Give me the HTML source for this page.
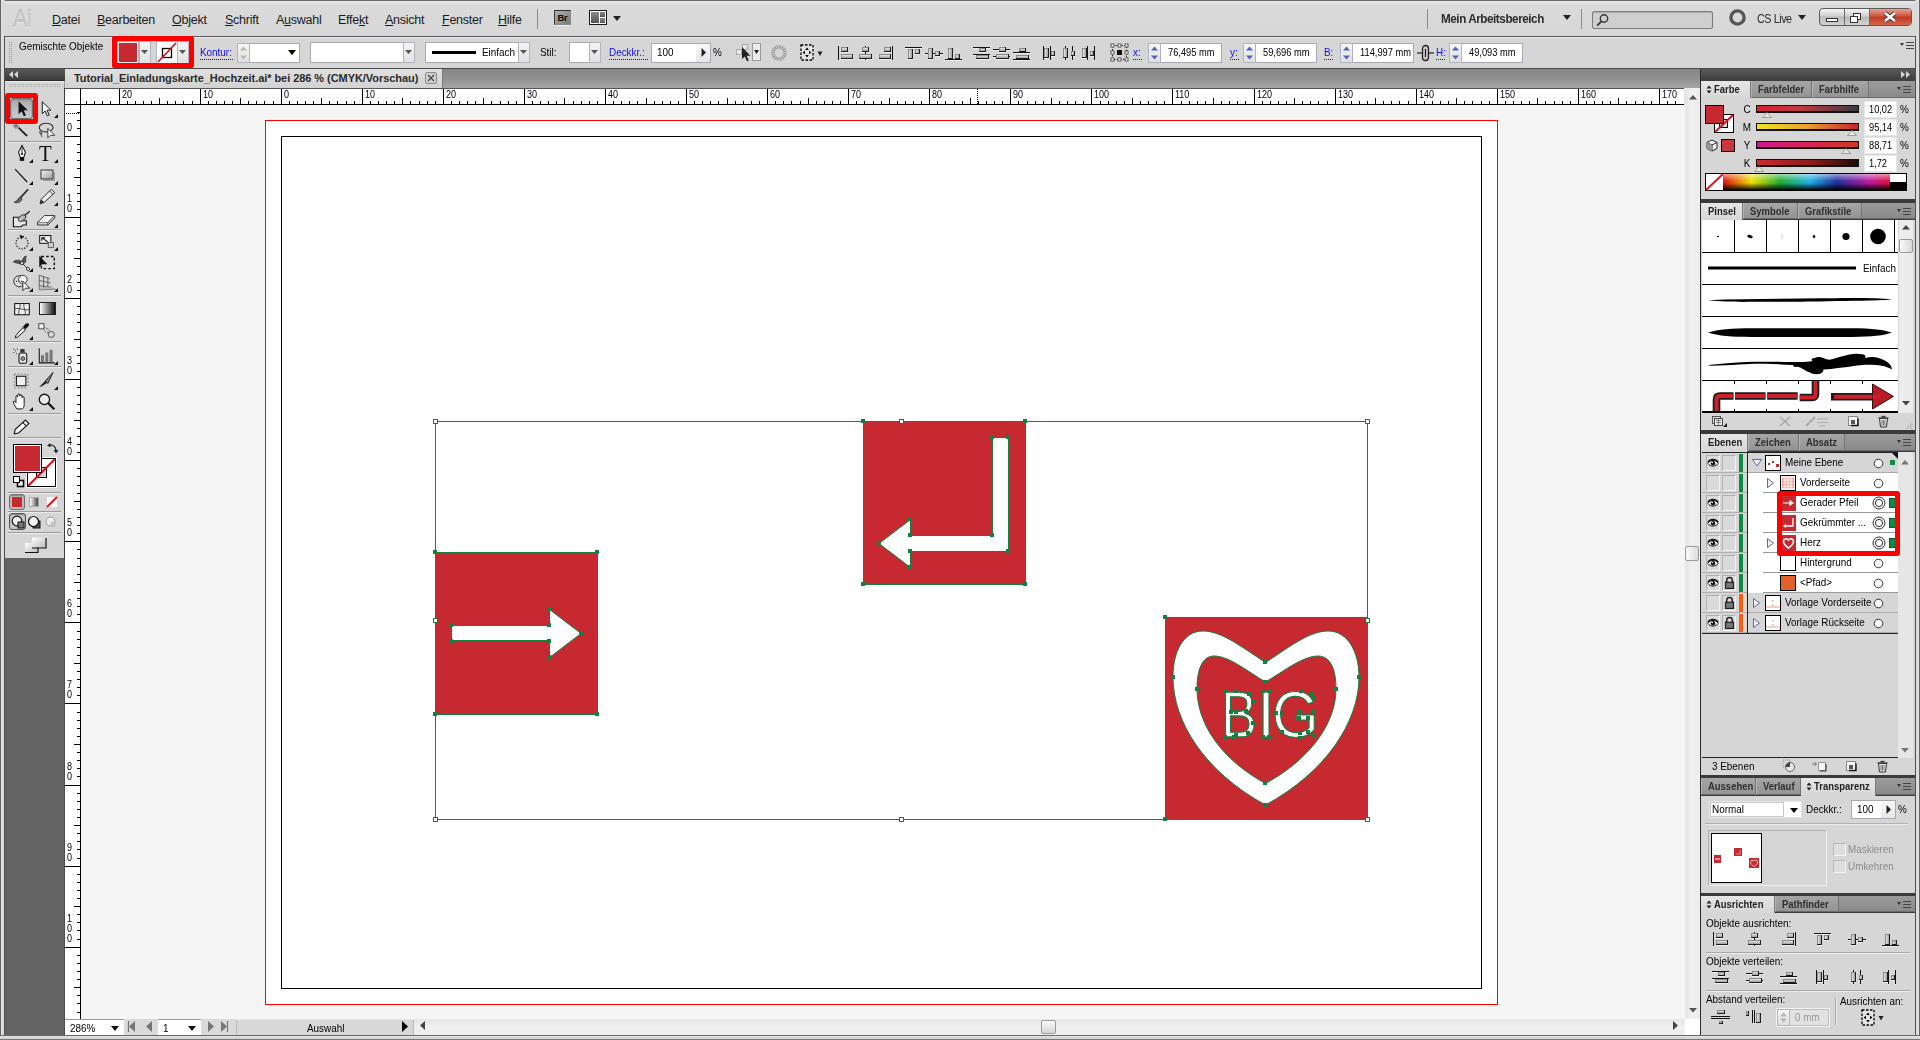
<!DOCTYPE html>
<html lang="de"><head><meta charset="utf-8"><title>Tutorial_Einladungskarte_Hochzeit.ai</title>
<style>
html,body{margin:0;padding:0}
body{width:1920px;height:1040px;position:relative;overflow:hidden;background:#d6d6d6;font-family:"Liberation Sans",sans-serif;font-size:11px;color:#000}
div,span.t,span.m,span.b,svg{position:absolute;box-sizing:border-box}
svg{overflow:visible}
span.t{white-space:nowrap;line-height:13px;font-size:11px;letter-spacing:0;transform:scaleX(.9);transform-origin:0 50%}
span.m{white-space:nowrap;font-size:12.5px;line-height:16px;color:#1a1a1a;letter-spacing:-0.25px}
span.b{white-space:nowrap;font-size:11px;line-height:13px;font-weight:bold;color:#2a2a2a;letter-spacing:0;transform:scaleX(.86);transform-origin:0 50%}
.inp{background:#fff;border:1px solid #a9a9b3}
</style></head><body>

<div style="left:0px;top:0px;width:1920px;height:1040px;background:#d6d6d6"></div>
<div style="left:0px;top:0px;width:1920px;height:37px;background:linear-gradient(#e6e6e6 0,#e6e6e6 2px,#dbdbdb 3px,#d7d7d7);border-top:1px solid #6a6a6a"></div>
<div style="left:0px;top:36px;width:1920px;height:1px;background:#5c5c5c"></div>
<div style="left:0px;top:37px;width:1920px;height:1px;background:#e8e8e8"></div>
<div style="left:0px;top:68px;width:1920px;height:1px;background:#4a4a4a"></div>
<span class="t" style="left:13px;top:5px;font-size:24px;line-height:28px;color:#c6c6c6;letter-spacing:-0.5px;transform:scaleX(0.9);transform-origin:0 0;text-shadow:0 1px 0 #ececec,0 -1px 0 #b4b4b4">Ai</span>
<span class="m" style="left:52px;top:12px;"><u>D</u>atei</span>
<span class="m" style="left:97px;top:12px;"><u>B</u>earbeiten</span>
<span class="m" style="left:172px;top:12px;"><u>O</u>bjekt</span>
<span class="m" style="left:225px;top:12px;"><u>S</u>chrift</span>
<span class="m" style="left:276px;top:12px;">A<u>u</u>swahl</span>
<span class="m" style="left:338px;top:12px;">Effe<u>k</u>t</span>
<span class="m" style="left:385px;top:12px;"><u>A</u>nsicht</span>
<span class="m" style="left:442px;top:12px;"><u>F</u>enster</span>
<span class="m" style="left:498px;top:12px;"><u>H</u>ilfe</span>
<div style="left:537px;top:9px;width:1px;height:20px;background:#8c8c8c"></div>
<div style="left:554px;top:10px;width:17px;height:15px;background:linear-gradient(135deg,#b0b0b0,#7a7a7a);border:1px solid #555;border-top-color:#2a2a2a;border-left-color:#3a3a3a;border-bottom-color:#8a8a8a;border-right-color:#8a8a8a;color:#0a0a0a;font-size:9.5px;font-weight:bold;line-height:13px;text-align:center;letter-spacing:-0.3px;box-shadow:0 1px 0 #eee">Br</div>
<svg style="left:589px;top:10px" width="18" height="15" viewBox="0 0 18 15" ><defs><linearGradient id="lg3" x1="0" y1="0" x2="0" y2="1"><stop offset="0" stop-color="#8a8a8a"/><stop offset="1" stop-color="#555"/></linearGradient></defs><rect x="0.500" y="0.500" width="17" height="14" fill="#fff" stroke="#1a1a1a"/><rect x="2" y="2" width="8" height="11" fill="url(#lg3)"/><rect x="11" y="2" width="5" height="5" fill="url(#lg3)"/><rect x="11" y="8" width="5" height="5" fill="url(#lg3)"/></svg>
<svg style="left:613px;top:16px" width="9" height="6" viewBox="0 0 9 6" ><path d="M0 0h8l-4 5z" fill="#222"/></svg>
<div style="left:1427px;top:9px;width:1px;height:20px;background:#8c8c8c"></div>
<span class="t" style="left:1441px;top:11px;font-size:13px;line-height:16px;font-weight:bold;color:#2c2c2c;letter-spacing:-0.5px">Mein Arbeitsbereich</span>
<svg style="left:1563px;top:15px" width="9" height="6" viewBox="0 0 9 6" ><path d="M0 0h8l-4 5z" fill="#222"/></svg>
<div style="left:1581px;top:9px;width:1px;height:20px;background:#8c8c8c"></div>
<div style="left:1592px;top:11px;width:121px;height:18px;background:#cfcfcf;border:1px solid #7b7b7b;border-radius:2px;box-shadow:inset 0 1px 1px #aaa"></div>
<svg style="left:1596px;top:13px" width="14" height="14" viewBox="0 0 14 14" ><circle cx="8" cy="5.5" r="3.7" fill="none" stroke="#333" stroke-width="1.4"/><path d="M5.3 8.4L1.2 12.6" stroke="#333" stroke-width="1.8"/></svg>
<svg style="left:1729px;top:9px" width="18" height="18" viewBox="0 0 18 18" ><circle cx="8.5" cy="8.5" r="6.6" fill="none" stroke="#555" stroke-width="3.4"/></svg>
<span class="t" style="left:1757px;top:11px;font-size:12px;line-height:16px;color:#2c2c2c;letter-spacing:-0.5px">CS Live</span>
<svg style="left:1798px;top:15px" width="9" height="6" viewBox="0 0 9 6" ><path d="M0 0h8l-4 5z" fill="#222"/></svg>
<div style="left:1819px;top:8px;width:93px;height:18px;border:1px solid #5a5a5a;border-radius:4px;background:linear-gradient(#f4f4f4,#cfcfcf 45%,#b9b9b9 50%,#d3d3d3);overflow:hidden"></div>
<div style="left:1870px;top:9px;width:41px;height:16px;background:linear-gradient(#e8a090,#d0543c 45%,#c03a22 50%,#d4644a);border-radius:0 3px 3px 0"></div>
<div style="left:1844px;top:9px;width:1px;height:16px;background:#6a6a6a"></div>
<div style="left:1869px;top:9px;width:1px;height:16px;background:#6a6a6a"></div>
<svg style="left:1819px;top:8px" width="93" height="18" viewBox="0 0 93 18" ><rect x="7.5" y="10.5" width="11" height="3" fill="#fff" stroke="#333"/><rect x="34.500" y="5.500" width="7" height="6" fill="#fff" stroke="#333"/><rect x="31.500" y="8.500" width="7" height="6" fill="#fff" stroke="#333"/><path d="M66 5l10 8M76 5l-10 8" stroke="#444" stroke-width="4.4"/><path d="M66 5l10 8M76 5l-10 8" stroke="#fff" stroke-width="2.4"/></svg>
<div style="left:0px;top:0px;width:5px;height:1040px;background:linear-gradient(90deg,#62646a 0,#62646a 1px,#e2e2e2 1px,#d8d8d8 4px,#d8d8d8 5px)"></div>
<div style="left:4px;top:36px;width:1px;height:1000px;background:#505050"></div>
<div style="left:1915px;top:0px;width:5px;height:1040px;background:linear-gradient(90deg,#d8d8d8 0,#d8d8d8 1px,#d8d8d8 1px,#e2e2e2 4px,#62646a 4px)"></div>
<div style="left:1915px;top:36px;width:1px;height:1000px;background:#505050"></div>
<div style="left:0px;top:1035px;width:1920px;height:5px;background:linear-gradient(#6a6a6a 0,#6a6a6a 1px,#e2e2e2 1px,#d2d2d2 4px,#777 4px)"></div>
<div style="left:65px;top:69px;width:1635px;height:19px;background:linear-gradient(#878787,#8f8f8f 45%,#a6a6a6)"></div>
<div style="left:65px;top:69px;width:378px;height:19px;background:linear-gradient(#e0e0e0,#d3d3d3);border-right:1px solid #7a7a7a"></div>
<span class="b" style="left:74px;top:72px;letter-spacing:-0.06px;transform:none">Tutorial_Einladungskarte_Hochzeit.ai* bei 286 % (CMYK/Vorschau)</span>
<div style="left:425px;top:72px;width:12px;height:12px;border:1px solid #8a8a8a;border-radius:2px;background:#cfcfcf"></div>
<svg style="left:425px;top:72px" width="12" height="12" viewBox="0 0 12 12" ><path d="M3 3l6 6M9 3l-6 6" stroke="#444" stroke-width="1.2"/></svg>
<div style="left:65px;top:88px;width:1619px;height:17px;background:#fff;border-top:1px solid #555;border-bottom:1px solid #000"></div>
<div style="left:1684px;top:88px;width:1px;height:17px;background:#e0e0e0"></div>
<div style="left:65px;top:104px;width:16px;height:915px;background:#fff;border-right:1px solid #000"></div>
<div style="left:65px;top:88px;width:16px;height:17px;background:#fff;border-top:1px solid #555;border-bottom:1px solid #000;border-right:1px solid #000"></div>
<svg style="left:0px;top:0px" width="1920" height="1040" viewBox="0 0 1920 1040" ><path d="M86 101v3h1v-3zM94 101v3h1v-3zM102 101v3h1v-3zM110 101v3h1v-3zM119 89v15h1v-15zM127 101v3h1v-3zM135 101v3h1v-3zM143 101v3h1v-3zM151 101v3h1v-3zM159 98v6h1v-6zM167 101v3h1v-3zM175 101v3h1v-3zM183 101v3h1v-3zM192 101v3h1v-3zM200 89v15h1v-15zM208 101v3h1v-3zM216 101v3h1v-3zM224 101v3h1v-3zM232 101v3h1v-3zM240 98v6h1v-6zM248 101v3h1v-3zM256 101v3h1v-3zM264 101v3h1v-3zM273 101v3h1v-3zM281 89v15h1v-15zM289 101v3h1v-3zM297 101v3h1v-3zM305 101v3h1v-3zM313 101v3h1v-3zM321 98v6h1v-6zM329 101v3h1v-3zM337 101v3h1v-3zM346 101v3h1v-3zM354 101v3h1v-3zM362 89v15h1v-15zM370 101v3h1v-3zM378 101v3h1v-3zM386 101v3h1v-3zM394 101v3h1v-3zM402 98v6h1v-6zM410 101v3h1v-3zM419 101v3h1v-3zM427 101v3h1v-3zM435 101v3h1v-3zM443 89v15h1v-15zM451 101v3h1v-3zM459 101v3h1v-3zM467 101v3h1v-3zM475 101v3h1v-3zM483 98v6h1v-6zM491 101v3h1v-3zM500 101v3h1v-3zM508 101v3h1v-3zM516 101v3h1v-3zM524 89v15h1v-15zM532 101v3h1v-3zM540 101v3h1v-3zM548 101v3h1v-3zM556 101v3h1v-3zM564 98v6h1v-6zM573 101v3h1v-3zM581 101v3h1v-3zM589 101v3h1v-3zM597 101v3h1v-3zM605 89v15h1v-15zM613 101v3h1v-3zM621 101v3h1v-3zM629 101v3h1v-3zM637 101v3h1v-3zM646 98v6h1v-6zM654 101v3h1v-3zM662 101v3h1v-3zM670 101v3h1v-3zM678 101v3h1v-3zM686 89v15h1v-15zM694 101v3h1v-3zM702 101v3h1v-3zM710 101v3h1v-3zM718 101v3h1v-3zM727 98v6h1v-6zM735 101v3h1v-3zM743 101v3h1v-3zM751 101v3h1v-3zM759 101v3h1v-3zM767 89v15h1v-15zM775 101v3h1v-3zM783 101v3h1v-3zM791 101v3h1v-3zM800 101v3h1v-3zM808 98v6h1v-6zM816 101v3h1v-3zM824 101v3h1v-3zM832 101v3h1v-3zM840 101v3h1v-3zM848 89v15h1v-15zM856 101v3h1v-3zM864 101v3h1v-3zM873 101v3h1v-3zM881 101v3h1v-3zM889 98v6h1v-6zM897 101v3h1v-3zM905 101v3h1v-3zM913 101v3h1v-3zM921 101v3h1v-3zM929 89v15h1v-15zM937 101v3h1v-3zM945 101v3h1v-3zM954 101v3h1v-3zM962 101v3h1v-3zM970 98v6h1v-6zM978 101v3h1v-3zM986 101v3h1v-3zM994 101v3h1v-3zM1002 101v3h1v-3zM1010 89v15h1v-15zM1018 101v3h1v-3zM1027 101v3h1v-3zM1035 101v3h1v-3zM1043 101v3h1v-3zM1051 98v6h1v-6zM1059 101v3h1v-3zM1067 101v3h1v-3zM1075 101v3h1v-3zM1083 101v3h1v-3zM1091 89v15h1v-15zM1100 101v3h1v-3zM1108 101v3h1v-3zM1116 101v3h1v-3zM1124 101v3h1v-3zM1132 98v6h1v-6zM1140 101v3h1v-3zM1148 101v3h1v-3zM1156 101v3h1v-3zM1164 101v3h1v-3zM1172 89v15h1v-15zM1181 101v3h1v-3zM1189 101v3h1v-3zM1197 101v3h1v-3zM1205 101v3h1v-3zM1213 98v6h1v-6zM1221 101v3h1v-3zM1229 101v3h1v-3zM1237 101v3h1v-3zM1245 101v3h1v-3zM1254 89v15h1v-15zM1262 101v3h1v-3zM1270 101v3h1v-3zM1278 101v3h1v-3zM1286 101v3h1v-3zM1294 98v6h1v-6zM1302 101v3h1v-3zM1310 101v3h1v-3zM1318 101v3h1v-3zM1327 101v3h1v-3zM1335 89v15h1v-15zM1343 101v3h1v-3zM1351 101v3h1v-3zM1359 101v3h1v-3zM1367 101v3h1v-3zM1375 98v6h1v-6zM1383 101v3h1v-3zM1391 101v3h1v-3zM1399 101v3h1v-3zM1408 101v3h1v-3zM1416 89v15h1v-15zM1424 101v3h1v-3zM1432 101v3h1v-3zM1440 101v3h1v-3zM1448 101v3h1v-3zM1456 98v6h1v-6zM1464 101v3h1v-3zM1472 101v3h1v-3zM1481 101v3h1v-3zM1489 101v3h1v-3zM1497 89v15h1v-15zM1505 101v3h1v-3zM1513 101v3h1v-3zM1521 101v3h1v-3zM1529 101v3h1v-3zM1537 98v6h1v-6zM1545 101v3h1v-3zM1554 101v3h1v-3zM1562 101v3h1v-3zM1570 101v3h1v-3zM1578 89v15h1v-15zM1586 101v3h1v-3zM1594 101v3h1v-3zM1602 101v3h1v-3zM1610 101v3h1v-3zM1618 98v6h1v-6zM1626 101v3h1v-3zM1635 101v3h1v-3zM1643 101v3h1v-3zM1651 101v3h1v-3zM1659 89v15h1v-15zM1667 101v3h1v-3zM1675 101v3h1v-3z" fill="#000" shape-rendering="crispEdges"/></svg>
<span class="t" style="left:122px;top:90px;font-size:10px;line-height:10px;color:#000010">20</span>
<span class="t" style="left:203px;top:90px;font-size:10px;line-height:10px;color:#000010">10</span>
<span class="t" style="left:284px;top:90px;font-size:10px;line-height:10px;color:#000010">0</span>
<span class="t" style="left:365px;top:90px;font-size:10px;line-height:10px;color:#000010">10</span>
<span class="t" style="left:446px;top:90px;font-size:10px;line-height:10px;color:#000010">20</span>
<span class="t" style="left:527px;top:90px;font-size:10px;line-height:10px;color:#000010">30</span>
<span class="t" style="left:608px;top:90px;font-size:10px;line-height:10px;color:#000010">40</span>
<span class="t" style="left:689px;top:90px;font-size:10px;line-height:10px;color:#000010">50</span>
<span class="t" style="left:770px;top:90px;font-size:10px;line-height:10px;color:#000010">60</span>
<span class="t" style="left:851px;top:90px;font-size:10px;line-height:10px;color:#000010">70</span>
<span class="t" style="left:932px;top:90px;font-size:10px;line-height:10px;color:#000010">80</span>
<span class="t" style="left:1013px;top:90px;font-size:10px;line-height:10px;color:#000010">90</span>
<span class="t" style="left:1094px;top:90px;font-size:10px;line-height:10px;color:#000010">100</span>
<span class="t" style="left:1175px;top:90px;font-size:10px;line-height:10px;color:#000010">110</span>
<span class="t" style="left:1257px;top:90px;font-size:10px;line-height:10px;color:#000010">120</span>
<span class="t" style="left:1338px;top:90px;font-size:10px;line-height:10px;color:#000010">130</span>
<span class="t" style="left:1419px;top:90px;font-size:10px;line-height:10px;color:#000010">140</span>
<span class="t" style="left:1500px;top:90px;font-size:10px;line-height:10px;color:#000010">150</span>
<span class="t" style="left:1581px;top:90px;font-size:10px;line-height:10px;color:#000010">160</span>
<span class="t" style="left:1662px;top:90px;font-size:10px;line-height:10px;color:#000010">170</span>
<svg style="left:0px;top:0px" width="1920" height="1040" viewBox="0 0 1920 1040" ><path d="M77 112h3v1h-3zM77 120h3v1h-3zM77 128h3v1h-3zM65 136h15v1h-15zM77 144h3v1h-3zM77 152h3v1h-3zM77 160h3v1h-3zM77 168h3v1h-3zM74 177h6v1h-6zM77 185h3v1h-3zM77 193h3v1h-3zM77 201h3v1h-3zM77 209h3v1h-3zM65 217h15v1h-15zM77 225h3v1h-3zM77 233h3v1h-3zM77 241h3v1h-3zM77 249h3v1h-3zM74 258h6v1h-6zM77 266h3v1h-3zM77 274h3v1h-3zM77 282h3v1h-3zM77 290h3v1h-3zM65 298h15v1h-15zM77 306h3v1h-3zM77 314h3v1h-3zM77 322h3v1h-3zM77 331h3v1h-3zM74 339h6v1h-6zM77 347h3v1h-3zM77 355h3v1h-3zM77 363h3v1h-3zM77 371h3v1h-3zM65 379h15v1h-15zM77 387h3v1h-3zM77 395h3v1h-3zM77 404h3v1h-3zM77 412h3v1h-3zM74 420h6v1h-6zM77 428h3v1h-3zM77 436h3v1h-3zM77 444h3v1h-3zM77 452h3v1h-3zM65 460h15v1h-15zM77 468h3v1h-3zM77 476h3v1h-3zM77 485h3v1h-3zM77 493h3v1h-3zM74 501h6v1h-6zM77 509h3v1h-3zM77 517h3v1h-3zM77 525h3v1h-3zM77 533h3v1h-3zM65 541h15v1h-15zM77 549h3v1h-3zM77 558h3v1h-3zM77 566h3v1h-3zM77 574h3v1h-3zM74 582h6v1h-6zM77 590h3v1h-3zM77 598h3v1h-3zM77 606h3v1h-3zM77 614h3v1h-3zM65 622h15v1h-15zM77 631h3v1h-3zM77 639h3v1h-3zM77 647h3v1h-3zM77 655h3v1h-3zM74 663h6v1h-6zM77 671h3v1h-3zM77 679h3v1h-3zM77 687h3v1h-3zM77 695h3v1h-3zM65 703h15v1h-15zM77 712h3v1h-3zM77 720h3v1h-3zM77 728h3v1h-3zM77 736h3v1h-3zM74 744h6v1h-6zM77 752h3v1h-3zM77 760h3v1h-3zM77 768h3v1h-3zM77 776h3v1h-3zM65 785h15v1h-15zM77 793h3v1h-3zM77 801h3v1h-3zM77 809h3v1h-3zM77 817h3v1h-3zM74 825h6v1h-6zM77 833h3v1h-3zM77 841h3v1h-3zM77 849h3v1h-3zM77 858h3v1h-3zM65 866h15v1h-15zM77 874h3v1h-3zM77 882h3v1h-3zM77 890h3v1h-3zM77 898h3v1h-3zM74 906h6v1h-6zM77 914h3v1h-3zM77 922h3v1h-3zM77 930h3v1h-3zM77 939h3v1h-3zM65 947h15v1h-15zM77 955h3v1h-3zM77 963h3v1h-3zM77 971h3v1h-3zM77 979h3v1h-3zM74 987h6v1h-6zM77 995h3v1h-3zM77 1003h3v1h-3zM77 1012h3v1h-3z" fill="#000" shape-rendering="crispEdges"/></svg>
<span class="t" style="left:66px;top:123px;font-size:10px;line-height:10px;color:#000010;width:7px;text-align:center;transform-origin:50% 50%">0</span>
<span class="t" style="left:66px;top:204px;font-size:10px;line-height:10px;color:#000010;width:7px;text-align:center;transform-origin:50% 50%">0</span>
<span class="t" style="left:66px;top:194px;font-size:10px;line-height:10px;color:#000010;width:7px;text-align:center;transform-origin:50% 50%">1</span>
<span class="t" style="left:66px;top:285px;font-size:10px;line-height:10px;color:#000010;width:7px;text-align:center;transform-origin:50% 50%">0</span>
<span class="t" style="left:66px;top:275px;font-size:10px;line-height:10px;color:#000010;width:7px;text-align:center;transform-origin:50% 50%">2</span>
<span class="t" style="left:66px;top:366px;font-size:10px;line-height:10px;color:#000010;width:7px;text-align:center;transform-origin:50% 50%">0</span>
<span class="t" style="left:66px;top:356px;font-size:10px;line-height:10px;color:#000010;width:7px;text-align:center;transform-origin:50% 50%">3</span>
<span class="t" style="left:66px;top:447px;font-size:10px;line-height:10px;color:#000010;width:7px;text-align:center;transform-origin:50% 50%">0</span>
<span class="t" style="left:66px;top:437px;font-size:10px;line-height:10px;color:#000010;width:7px;text-align:center;transform-origin:50% 50%">4</span>
<span class="t" style="left:66px;top:528px;font-size:10px;line-height:10px;color:#000010;width:7px;text-align:center;transform-origin:50% 50%">0</span>
<span class="t" style="left:66px;top:518px;font-size:10px;line-height:10px;color:#000010;width:7px;text-align:center;transform-origin:50% 50%">5</span>
<span class="t" style="left:66px;top:609px;font-size:10px;line-height:10px;color:#000010;width:7px;text-align:center;transform-origin:50% 50%">0</span>
<span class="t" style="left:66px;top:599px;font-size:10px;line-height:10px;color:#000010;width:7px;text-align:center;transform-origin:50% 50%">6</span>
<span class="t" style="left:66px;top:690px;font-size:10px;line-height:10px;color:#000010;width:7px;text-align:center;transform-origin:50% 50%">0</span>
<span class="t" style="left:66px;top:680px;font-size:10px;line-height:10px;color:#000010;width:7px;text-align:center;transform-origin:50% 50%">7</span>
<span class="t" style="left:66px;top:772px;font-size:10px;line-height:10px;color:#000010;width:7px;text-align:center;transform-origin:50% 50%">0</span>
<span class="t" style="left:66px;top:762px;font-size:10px;line-height:10px;color:#000010;width:7px;text-align:center;transform-origin:50% 50%">8</span>
<span class="t" style="left:66px;top:853px;font-size:10px;line-height:10px;color:#000010;width:7px;text-align:center;transform-origin:50% 50%">0</span>
<span class="t" style="left:66px;top:843px;font-size:10px;line-height:10px;color:#000010;width:7px;text-align:center;transform-origin:50% 50%">9</span>
<span class="t" style="left:66px;top:934px;font-size:10px;line-height:10px;color:#000010;width:7px;text-align:center;transform-origin:50% 50%">0</span>
<span class="t" style="left:66px;top:924px;font-size:10px;line-height:10px;color:#000010;width:7px;text-align:center;transform-origin:50% 50%">0</span>
<span class="t" style="left:66px;top:914px;font-size:10px;line-height:10px;color:#000010;width:7px;text-align:center;transform-origin:50% 50%">1</span>
<svg style="left:0px;top:0px" width="1920" height="1040" viewBox="0 0 1920 1040" ><path d="M977.5 89v15" stroke="#000" stroke-dasharray="1 1" shape-rendering="crispEdges"/><path d="M66 113.500h14" stroke="#000" stroke-dasharray="1 1" shape-rendering="crispEdges"/></svg>
<div style="left:81px;top:105px;width:1604px;height:914px;background:#f5f5f5"></div>
<div style="left:265px;top:120px;width:1233px;height:885px;background:#fff;border:1px solid #fe0000"></div>
<div style="left:281px;top:136px;width:1201px;height:853px;background:#fff;border:1px solid #000"></div>
<svg style="left:0px;top:0px" width="1920" height="1040" viewBox="0 0 1920 1040" ><g shape-rendering="crispEdges">
<rect x="435" y="552" width="162" height="162" fill="#c6292f"/>
<rect x="863" y="421" width="162" height="163" fill="#c6292f"/>
<rect x="1165" y="617" width="202" height="202" fill="#c6292f"/>
</g>
<path d="M451.500 625.500H549.500V609.500L581 633.500L549.500 657.500V640.500H451.500Z" fill="#fff" stroke="#13803f" stroke-width="1"/>
<path d="M992.500 437.500H1008.500V551.500H910.500V567.500L879 543.500L910.500 519.500V535.500H992.500Z" fill="#fff" stroke="#13803f" stroke-width="1"/>
<path d="M1265.500 662.500C1243 648 1222 631 1203 631C1183 631 1173 652 1173 677C1173 722 1205 772 1265.500 805C1326 772 1359 722 1359 677C1359 652 1348 631 1328 631C1309 631 1288 648 1265.500 662.500Z
M1265.500 682C1247 671 1229 656 1214 656C1202 656 1197 670 1197 689C1197 724 1222 760 1265.500 783.500C1309 760 1336 724 1336 689C1336 670 1331 656 1318 656C1303 656 1284 671 1265.500 682Z" fill="#fff" fill-rule="evenodd" stroke="#13803f" stroke-width="1"/>
<g aria-label="BIG" font-family="Liberation Sans, sans-serif" font-size="65" fill="#fff" stroke="#13803f" stroke-width="1.200"><text transform="translate(1220.900 737.300) scale(0.830 1)" vector-effect="non-scaling-stroke">B</text><text transform="translate(1257 737.300)">I</text><text transform="translate(1272 737.300) scale(0.925 1)" vector-effect="non-scaling-stroke">G</text></g>
<g fill="none" stroke="#13803f" stroke-width="1" shape-rendering="crispEdges">
<rect x="435.500" y="421.500" width="932" height="398"/>
<rect x="435.500" y="552.500" width="162" height="162"/>
<rect x="863.500" y="421.500" width="162" height="162.500"/>
<rect x="1165.500" y="617.500" width="202" height="202"/>
</g><rect x="433" y="550" width="4" height="4" fill="#13803f" shape-rendering="crispEdges"/><rect x="595" y="550" width="4" height="4" fill="#13803f" shape-rendering="crispEdges"/><rect x="433" y="712" width="4" height="4" fill="#13803f" shape-rendering="crispEdges"/><rect x="595" y="712" width="4" height="4" fill="#13803f" shape-rendering="crispEdges"/><rect x="861" y="419" width="4" height="4" fill="#13803f" shape-rendering="crispEdges"/><rect x="1023" y="419" width="4" height="4" fill="#13803f" shape-rendering="crispEdges"/><rect x="861" y="582" width="4" height="4" fill="#13803f" shape-rendering="crispEdges"/><rect x="1023" y="582" width="4" height="4" fill="#13803f" shape-rendering="crispEdges"/><rect x="1163" y="615" width="4" height="4" fill="#13803f" shape-rendering="crispEdges"/><rect x="1163" y="817" width="4" height="4" fill="#13803f" shape-rendering="crispEdges"/><rect x="449" y="623" width="4" height="4" fill="#13803f" shape-rendering="crispEdges"/><rect x="547" y="623" width="4" height="4" fill="#13803f" shape-rendering="crispEdges"/><rect x="547" y="607" width="4" height="4" fill="#13803f" shape-rendering="crispEdges"/><rect x="579" y="631" width="4" height="4" fill="#13803f" shape-rendering="crispEdges"/><rect x="547" y="655" width="4" height="4" fill="#13803f" shape-rendering="crispEdges"/><rect x="547" y="639" width="4" height="4" fill="#13803f" shape-rendering="crispEdges"/><rect x="449" y="639" width="4" height="4" fill="#13803f" shape-rendering="crispEdges"/><rect x="990" y="435" width="4" height="4" fill="#13803f" shape-rendering="crispEdges"/><rect x="1006" y="435" width="4" height="4" fill="#13803f" shape-rendering="crispEdges"/><rect x="1006" y="549" width="4" height="4" fill="#13803f" shape-rendering="crispEdges"/><rect x="908" y="549" width="4" height="4" fill="#13803f" shape-rendering="crispEdges"/><rect x="908" y="565" width="4" height="4" fill="#13803f" shape-rendering="crispEdges"/><rect x="877" y="541" width="4" height="4" fill="#13803f" shape-rendering="crispEdges"/><rect x="908" y="517" width="4" height="4" fill="#13803f" shape-rendering="crispEdges"/><rect x="908" y="533" width="4" height="4" fill="#13803f" shape-rendering="crispEdges"/><rect x="990" y="533" width="4" height="4" fill="#13803f" shape-rendering="crispEdges"/><rect x="1263" y="660" width="4" height="4" fill="#13803f" shape-rendering="crispEdges"/><rect x="1171" y="675" width="4" height="4" fill="#13803f" shape-rendering="crispEdges"/><rect x="1357" y="675" width="4" height="4" fill="#13803f" shape-rendering="crispEdges"/><rect x="1263" y="803" width="4" height="4" fill="#13803f" shape-rendering="crispEdges"/><rect x="1263" y="680" width="4" height="4" fill="#13803f" shape-rendering="crispEdges"/><rect x="1195" y="687" width="4" height="4" fill="#13803f" shape-rendering="crispEdges"/><rect x="1334" y="687" width="4" height="4" fill="#13803f" shape-rendering="crispEdges"/><rect x="1263" y="781" width="4" height="4" fill="#13803f" shape-rendering="crispEdges"/><rect x="1223" y="689" width="4" height="4" fill="#13803f" shape-rendering="crispEdges"/><rect x="1234" y="689" width="4" height="4" fill="#13803f" shape-rendering="crispEdges"/><rect x="1247" y="692" width="4" height="4" fill="#13803f" shape-rendering="crispEdges"/><rect x="1251" y="700" width="4" height="4" fill="#13803f" shape-rendering="crispEdges"/><rect x="1244" y="709" width="4" height="4" fill="#13803f" shape-rendering="crispEdges"/><rect x="1229" y="710" width="4" height="4" fill="#13803f" shape-rendering="crispEdges"/><rect x="1234" y="710" width="4" height="4" fill="#13803f" shape-rendering="crispEdges"/><rect x="1251" y="721" width="4" height="4" fill="#13803f" shape-rendering="crispEdges"/><rect x="1246" y="731" width="4" height="4" fill="#13803f" shape-rendering="crispEdges"/><rect x="1234" y="733" width="4" height="4" fill="#13803f" shape-rendering="crispEdges"/><rect x="1223" y="735" width="4" height="4" fill="#13803f" shape-rendering="crispEdges"/><rect x="1232" y="735" width="4" height="4" fill="#13803f" shape-rendering="crispEdges"/><rect x="1261" y="689" width="4" height="4" fill="#13803f" shape-rendering="crispEdges"/><rect x="1267" y="689" width="4" height="4" fill="#13803f" shape-rendering="crispEdges"/><rect x="1261" y="735" width="4" height="4" fill="#13803f" shape-rendering="crispEdges"/><rect x="1267" y="735" width="4" height="4" fill="#13803f" shape-rendering="crispEdges"/><rect x="1274" y="711" width="4" height="4" fill="#13803f" shape-rendering="crispEdges"/><rect x="1280" y="711" width="4" height="4" fill="#13803f" shape-rendering="crispEdges"/><rect x="1299" y="689" width="4" height="4" fill="#13803f" shape-rendering="crispEdges"/><rect x="1309" y="691" width="4" height="4" fill="#13803f" shape-rendering="crispEdges"/><rect x="1311" y="695" width="4" height="4" fill="#13803f" shape-rendering="crispEdges"/><rect x="1297" y="710" width="4" height="4" fill="#13803f" shape-rendering="crispEdges"/><rect x="1312" y="710" width="4" height="4" fill="#13803f" shape-rendering="crispEdges"/><rect x="1297" y="716" width="4" height="4" fill="#13803f" shape-rendering="crispEdges"/><rect x="1306" y="716" width="4" height="4" fill="#13803f" shape-rendering="crispEdges"/><rect x="1280" y="730" width="4" height="4" fill="#13803f" shape-rendering="crispEdges"/><rect x="1298" y="731" width="4" height="4" fill="#13803f" shape-rendering="crispEdges"/><rect x="1306" y="730" width="4" height="4" fill="#13803f" shape-rendering="crispEdges"/><rect x="1298" y="736" width="4" height="4" fill="#13803f" shape-rendering="crispEdges"/><rect x="1312" y="733" width="4" height="4" fill="#13803f" shape-rendering="crispEdges"/><rect x="433.5" y="419.5" width="4" height="4" fill="#fff" stroke="#13803f" shape-rendering="crispEdges"/><rect x="899.5" y="419.5" width="4" height="4" fill="#fff" stroke="#13803f" shape-rendering="crispEdges"/><rect x="1365.5" y="419.5" width="4" height="4" fill="#fff" stroke="#13803f" shape-rendering="crispEdges"/><rect x="433.5" y="618.5" width="4" height="4" fill="#fff" stroke="#13803f" shape-rendering="crispEdges"/><rect x="1365.5" y="618.5" width="4" height="4" fill="#fff" stroke="#13803f" shape-rendering="crispEdges"/><rect x="433.5" y="817.5" width="4" height="4" fill="#fff" stroke="#13803f" shape-rendering="crispEdges"/><rect x="899.5" y="817.5" width="4" height="4" fill="#fff" stroke="#13803f" shape-rendering="crispEdges"/><rect x="1365.5" y="817.5" width="4" height="4" fill="#fff" stroke="#13803f" shape-rendering="crispEdges"/></svg>
<div style="left:1685px;top:88px;width:15px;height:931px;background:linear-gradient(90deg,#e4e4e4,#f0f0f0 40%,#ededed);border-left:1px solid #e9e9e9"></div>
<svg style="left:1689px;top:95px" width="8" height="5" viewBox="0 0 8 5" ><path d="M0 4.500h8l-4-4.500z" fill="#555"/></svg>
<svg style="left:1689px;top:1008px" width="8" height="5" viewBox="0 0 8 5" ><path d="M0 0h8l-4 4.500z" fill="#555"/></svg>
<div style="left:1685px;top:546px;width:14px;height:15px;background:linear-gradient(90deg,#fafafa,#dcdcdc);border:1px solid #9a9a9a;border-radius:2px"></div>
<div style="left:1685px;top:1019px;width:15px;height:16px;background:#fff"></div>
<div style="left:65px;top:1019px;width:1620px;height:16px;background:linear-gradient(#e6e6e6,#f1f1f1 50%,#ececec)"></div>
<div style="left:65px;top:1019px;width:59px;height:16px;background:#fff;border-top:1px solid #999"></div>
<span class="t" style="left:70px;top:1022px;">286%</span>
<svg style="left:111px;top:1026px" width="9" height="6" viewBox="0 0 9 6" ><path d="M0 0h8l-4 5z" fill="#111"/></svg>
<div style="left:124px;top:1019px;width:112px;height:16px;background:#dadada"></div>
<svg style="left:127px;top:1021px" width="30" height="11" viewBox="0 0 30 11" ><path d="M1.500 0v11" stroke="#777" stroke-width="1.200"/><path d="M8 0v11l-6-5.500zM25 0v11l-6-5.500z" fill="#777"/></svg>
<div style="left:158px;top:1019px;width:43px;height:16px;background:#fff;border-top:1px solid #999"></div>
<span class="t" style="left:163px;top:1022px;">1</span>
<svg style="left:188px;top:1026px" width="9" height="6" viewBox="0 0 9 6" ><path d="M0 0h8l-4 5z" fill="#111"/></svg>
<svg style="left:205px;top:1021px" width="30" height="11" viewBox="0 0 30 11" ><path d="M22.500 0v11" stroke="#777" stroke-width="1.200"/><path d="M3 0v11l6-5.500zM16 0v11l6-5.500z" fill="#777"/></svg>
<div style="left:236px;top:1020px;width:178px;height:15px;background:#d8d8d8;border-left:1px solid #bbb;border-right:1px solid #bbb"></div>
<span class="t" style="left:307px;top:1022px;">Auswahl</span>
<svg style="left:402px;top:1021px" width="8" height="12" viewBox="0 0 8 12" ><path d="M0 0v11l6-5.500z" fill="#000"/></svg>
<svg style="left:419px;top:1021px" width="8" height="10" viewBox="0 0 8 10" ><path d="M6 0v9l-5-4.500z" fill="#444"/></svg>
<svg style="left:1672px;top:1021px" width="8" height="10" viewBox="0 0 8 10" ><path d="M1 0v9l5-4.500z" fill="#444"/></svg>
<div style="left:1041px;top:1020px;width:15px;height:14px;background:linear-gradient(#fafafa,#d6d6d6);border:1px solid #9a9a9a;border-radius:2px"></div>
<div style="left:5px;top:69px;width:60px;height:12px;background:linear-gradient(#5a5a5a,#3c3c3c);border-bottom:1px solid #2a2a2a"></div>
<svg style="left:8px;top:71px" width="12" height="8" viewBox="0 0 12 8" ><path d="M5 0v7l-4-3.500zM10 0v7l-4-3.500z" fill="#d8d8d8"/></svg>
<div style="left:5px;top:81px;width:60px;height:477px;background:#d6d6d6;border-top:1px solid #ededed;border-right:1px solid #9c9c9c"></div>
<div style="left:64px;top:88px;width:1px;height:470px;background:#3c3c3c"></div>
<div style="left:5px;top:558px;width:60px;height:477px;background:#646464;border-right:1px solid #4c4c4c"></div>
<div style="left:9px;top:84px;width:52px;height:1px;background:repeating-linear-gradient(90deg,#a4a4a4 0 1px,transparent 1px 2px)"></div>
<div style="left:9px;top:86px;width:52px;height:1px;background:repeating-linear-gradient(90deg,#a4a4a4 0 1px,transparent 1px 2px)"></div>
<div style="left:8px;top:141px;width:53px;height:2px;background:#9b9b9b;border-bottom:1px solid #ebebeb"></div>
<div style="left:8px;top:229px;width:53px;height:2px;background:#9b9b9b;border-bottom:1px solid #ebebeb"></div>
<div style="left:8px;top:295px;width:53px;height:2px;background:#9b9b9b;border-bottom:1px solid #ebebeb"></div>
<div style="left:8px;top:341px;width:53px;height:2px;background:#9b9b9b;border-bottom:1px solid #ebebeb"></div>
<div style="left:8px;top:366px;width:53px;height:2px;background:#9b9b9b;border-bottom:1px solid #ebebeb"></div>
<div style="left:8px;top:413px;width:53px;height:2px;background:#9b9b9b;border-bottom:1px solid #ebebeb"></div>
<div style="left:8px;top:437px;width:53px;height:2px;background:#9b9b9b;border-bottom:1px solid #ebebeb"></div>
<div style="left:8px;top:492px;width:53px;height:2px;background:#9b9b9b;border-bottom:1px solid #ebebeb"></div>
<div style="left:8px;top:511px;width:53px;height:2px;background:#9b9b9b;border-bottom:1px solid #ebebeb"></div>
<div style="left:8px;top:532px;width:53px;height:2px;background:#9b9b9b;border-bottom:1px solid #ebebeb"></div>
<div style="left:10px;top:98px;width:23px;height:21px;border:1px solid #6e6e6e;border-radius:3px;background:linear-gradient(#a9a9a9,#bdbdbd 50%,#c9c9c9);box-shadow:inset 0 1px 2px #808080"></div>
<svg style="left:10px;top:98px" width="24" height="22" viewBox="0 0 24 22"><g transform="translate(12 11) scale(0.86) translate(-12 -11)"><path d="M8 2v15l3.500-3.500 2.700 6 2.400-1.100-2.700-5.900h4.800z" fill="#111"/></g></svg>
<svg style="left:35px;top:98px" width="24" height="22" viewBox="0 0 24 22"><g transform="translate(12 11) scale(0.86) translate(-12 -11)"><path d="M6.500 2.500v14l3.300-3.200 2.600 5.700 2.200-1-2.600-5.600h4.500z" fill="#fff" stroke="#111" stroke-width="1.100"/></g></svg>
<svg style="left:54px;top:114px" width="4" height="4" viewBox="0 0 4 4"><path d="M4 0v4h-4z" fill="#111"/></svg>
<svg style="left:10px;top:120px" width="24" height="22" viewBox="0 0 24 22"><g transform="translate(12 11) scale(0.86) translate(-12 -11)"><path d="M8 7l10 10" stroke="#222" stroke-width="2.200"/><path d="M5 1v8M1 5h8M2.200 2.200l5.600 5.600M7.800 2.200l-5.600 5.600" stroke="#555" stroke-width="0.800"/></g></svg>
<svg style="left:35px;top:120px" width="24" height="22" viewBox="0 0 24 22"><g transform="translate(12 11) scale(0.86) translate(-12 -11)"><ellipse cx="11" cy="7" rx="8" ry="5" fill="none" stroke="#333" stroke-width="1.300"/><path d="M5 10c-3 2-1 6 1 4c1-2-1-3-1-1c0 3 1 4 1 5" fill="none" stroke="#333" stroke-width="1.100"/><path d="M13 8v11l3-3h5z" fill="#fff" stroke="#222" stroke-width="1"/></g></svg>
<svg style="left:10px;top:143px" width="24" height="22" viewBox="0 0 24 22"><g transform="translate(12 11) scale(0.86) translate(-12 -11)"><path d="M12 1l-4 8 2 6h4l2-6z" fill="#fff" stroke="#111" stroke-width="1.200"/><path d="M12 3v8" stroke="#111"/><circle cx="12" cy="11" r="1.200" fill="#111"/><rect x="9.500" y="15.500" width="5" height="3.500" fill="#111"/></g></svg>
<svg style="left:29px;top:159px" width="4" height="4" viewBox="0 0 4 4"><path d="M4 0v4h-4z" fill="#111"/></svg>
<span class="t" style="left:39px;top:142px;font-family:'Liberation Serif',serif;font-size:23px;line-height:24px;letter-spacing:0;color:#111">T</span>
<svg style="left:54px;top:159px" width="4" height="4" viewBox="0 0 4 4"><path d="M4 0v4h-4z" fill="#111"/></svg>
<svg style="left:10px;top:165px" width="24" height="22" viewBox="0 0 24 22"><g transform="translate(12 11) scale(0.86) translate(-12 -11)"><path d="M4 3l14 15" stroke="#111" stroke-width="1.400"/></g></svg>
<svg style="left:29px;top:181px" width="4" height="4" viewBox="0 0 4 4"><path d="M4 0v4h-4z" fill="#111"/></svg>
<svg style="left:40px;top:169px" width="16" height="13" viewBox="0 0 16 13"><defs><linearGradient id="gr1" x1="0" y1="0" x2="1" y2="1"><stop offset="0" stop-color="#f6f6f6"/><stop offset="1" stop-color="#9a9a9a"/></linearGradient></defs><rect x="1" y="1" width="12" height="9" fill="url(#gr1)" stroke="#333"/><path d="M3 11.500h11.500v-8.500" fill="none" stroke="#999"/></svg>
<svg style="left:54px;top:181px" width="4" height="4" viewBox="0 0 4 4"><path d="M4 0v4h-4z" fill="#111"/></svg>
<svg style="left:10px;top:186px" width="24" height="22" viewBox="0 0 24 22"><g transform="translate(12 11) scale(0.86) translate(-12 -11)"><path d="M19 2l-9 10" stroke="#333" stroke-width="2.200"/><path d="M10 11c-3 1-3 5-7 6c4 2 9-1 9-4z" fill="#666" stroke="#222" stroke-width="0.800"/></g></svg>
<svg style="left:35px;top:186px" width="24" height="22" viewBox="0 0 24 22"><g transform="translate(12 11) scale(0.86) translate(-12 -11)"><path d="M17 2l4 4-12 11-5 2 1-5z" fill="#ececec" stroke="#222" stroke-width="1.100"/><path d="M15 4l4 4" stroke="#222"/><path d="M4 19l1-5 4 3z" fill="#333"/></g></svg>
<svg style="left:54px;top:202px" width="4" height="4" viewBox="0 0 4 4"><path d="M4 0v4h-4z" fill="#111"/></svg>
<svg style="left:10px;top:208px" width="24" height="22" viewBox="0 0 24 22"><g transform="translate(12 11) scale(0.86) translate(-12 -11)"><path d="M2 9h11v4l4 0v5h-4l-2 2h-9z" fill="#e8e8e8" stroke="#111" stroke-width="1.300"/><ellipse cx="12" cy="10" rx="5" ry="3" transform="rotate(-35 12 10)" fill="#bbb" stroke="#222"/><path d="M15 7l6-5" stroke="#222" stroke-width="1.400"/></g></svg>
<svg style="left:35px;top:208px" width="24" height="22" viewBox="0 0 24 22"><g transform="translate(12 11) scale(0.86) translate(-12 -11)"><path d="M9 7h12l-8 8h-12z" fill="#f4f4f4" stroke="#222" stroke-width="1"/><path d="M1 15v3h12v-3M13 18l8-8v-3" fill="#cfcfcf" stroke="#222" stroke-width="1"/></g></svg>
<svg style="left:54px;top:224px" width="4" height="4" viewBox="0 0 4 4"><path d="M4 0v4h-4z" fill="#111"/></svg>
<svg style="left:10px;top:231px" width="24" height="22" viewBox="0 0 24 22"><g transform="translate(12 11) scale(0.86) translate(-12 -11)"><circle cx="12" cy="12" r="7" fill="none" stroke="#111" stroke-width="1.400" stroke-dasharray="1.500 1.800"/><path d="M9 3l5 1-3 4z" fill="#111"/></g></svg>
<svg style="left:29px;top:247px" width="4" height="4" viewBox="0 0 4 4"><path d="M4 0v4h-4z" fill="#111"/></svg>
<svg style="left:35px;top:231px" width="24" height="22" viewBox="0 0 24 22"><g transform="translate(12 11) scale(0.86) translate(-12 -11)"><rect x="3.500" y="3.500" width="13" height="9" fill="#f2f2f2" stroke="#111" stroke-width="1.200"/><rect x="13.500" y="11.500" width="6" height="6" fill="#cfcfcf" stroke="#555"/><path d="M6 6l7 5M6 6h4M6 6v3.500" stroke="#111" stroke-width="1.200" fill="none"/></g></svg>
<svg style="left:54px;top:247px" width="4" height="4" viewBox="0 0 4 4"><path d="M4 0v4h-4z" fill="#111"/></svg>
<svg style="left:10px;top:252px" width="24" height="22" viewBox="0 0 24 22"><g transform="translate(12 11) scale(0.86) translate(-12 -11)"><path d="M2 10c4-5 6 0 9-1s2-6 6-6c-2 3 1 5-2 8s-7 0-13-1z" fill="#555" stroke="#222" stroke-width="0.800"/><path d="M8 7l11 11" stroke="#222" stroke-width="1"/><circle cx="19" cy="18" r="1.800" fill="#fff" stroke="#222"/><circle cx="12" cy="11" r="1.800" fill="#fff" stroke="#222"/></g></svg>
<svg style="left:29px;top:268px" width="4" height="4" viewBox="0 0 4 4"><path d="M4 0v4h-4z" fill="#111"/></svg>
<svg style="left:35px;top:252px" width="24" height="22" viewBox="0 0 24 22"><g transform="translate(12 11) scale(0.86) translate(-12 -11)"><rect x="5.500" y="3.500" width="15" height="14" fill="none" stroke="#111" stroke-width="1.600" stroke-dasharray="3 2.500"/><path d="M3 3v13l3.500-3.500h6z" fill="#111"/></g></svg>
<svg style="left:10px;top:272px" width="24" height="22" viewBox="0 0 24 22"><g transform="translate(12 11) scale(0.86) translate(-12 -11)"><circle cx="9" cy="9" r="6.500" fill="#e0e0e0" stroke="#222" stroke-width="1.100"/><circle cx="13" cy="7" r="5" fill="#f0f0f0" stroke="#222" stroke-width="1"/><path d="M5 9h1M8 9h1M11 9h1" stroke="#111" stroke-width="1.400"/><path d="M13 9v11l3-3h5z" fill="#fff" stroke="#111" stroke-width="1"/></g></svg>
<svg style="left:29px;top:288px" width="4" height="4" viewBox="0 0 4 4"><path d="M4 0v4h-4z" fill="#111"/></svg>
<svg style="left:35px;top:272px" width="24" height="22" viewBox="0 0 24 22"><g transform="translate(12 11) scale(0.86) translate(-12 -11)"><path d="M3 2v17M8 3v14M13 5v11M3 2l12 4M3 8l13 3M3 14l14 2M3 19l19-1" stroke="#555" stroke-width="1" fill="none"/><path d="M3 19l19-1-5-3-14 1z" fill="#aaa" opacity="0.600"/></g></svg>
<svg style="left:54px;top:288px" width="4" height="4" viewBox="0 0 4 4"><path d="M4 0v4h-4z" fill="#111"/></svg>
<svg style="left:10px;top:299px" width="24" height="22" viewBox="0 0 24 22"><g transform="translate(12 11) scale(0.86) translate(-12 -11)"><rect x="3.500" y="3.500" width="17" height="13" fill="#efefef" stroke="#111" stroke-width="1.200"/><path d="M3 10c6-3 12 3 18 0M9 3c3 5-3 9 0 14M15 3c-3 5 3 9 0 14" stroke="#333" fill="none"/></g></svg>
<div style="left:39px;top:302px;width:17px;height:13px;border:1px solid #222;background:linear-gradient(90deg,#fff,#111)"></div>
<svg style="left:10px;top:320px" width="24" height="22" viewBox="0 0 24 22"><g transform="translate(12 11) scale(0.86) translate(-12 -11)"><path d="M18 2c2 0 3 2 2 3l-4 4-3-3 4-4z" fill="#111"/><path d="M13 7l3 3-9 8-3 1 1-3z" fill="#f0f0f0" stroke="#111" stroke-width="1.100"/></g></svg>
<svg style="left:29px;top:336px" width="4" height="4" viewBox="0 0 4 4"><path d="M4 0v4h-4z" fill="#111"/></svg>
<svg style="left:35px;top:320px" width="24" height="22" viewBox="0 0 24 22"><g transform="translate(12 11) scale(0.86) translate(-12 -11)"><rect x="2.500" y="2.500" width="6" height="6" fill="#f0f0f0" stroke="#333"/><circle cx="17" cy="15" r="3.500" fill="#ddd" stroke="#333"/><path d="M9 7h1M11 9h1M13 11h1M8 10h1M10 12h1M12 8h1M14 9h1M12 13h1" stroke="#444"/></g></svg>
<svg style="left:10px;top:345px" width="24" height="22" viewBox="0 0 24 22"><g transform="translate(12 11) scale(0.86) translate(-12 -11)"><rect x="8.500" y="7.500" width="9" height="12" rx="2" fill="#e4e4e4" stroke="#111" stroke-width="1.200"/><circle cx="13" cy="14" r="2.200" fill="#999" stroke="#222"/><rect x="10" y="3" width="5" height="4" fill="#333"/><path d="M2 3h1M4 5h1M6 3h1M2 7h1M5 8h1" stroke="#222" stroke-width="1.200"/></g></svg>
<svg style="left:29px;top:361px" width="4" height="4" viewBox="0 0 4 4"><path d="M4 0v4h-4z" fill="#111"/></svg>
<svg style="left:35px;top:345px" width="24" height="22" viewBox="0 0 24 22"><g transform="translate(12 11) scale(0.86) translate(-12 -11)"><path d="M3 2v17h18" fill="none" stroke="#111" stroke-width="1.200"/><rect x="5" y="10" width="3.500" height="8" fill="#777"/><rect x="10" y="7" width="3.500" height="11" fill="#777"/><rect x="15" y="4" width="3.500" height="14" fill="#777"/></g></svg>
<svg style="left:54px;top:361px" width="4" height="4" viewBox="0 0 4 4"><path d="M4 0v4h-4z" fill="#111"/></svg>
<svg style="left:10px;top:370px" width="24" height="22" viewBox="0 0 24 22"><g transform="translate(12 11) scale(0.86) translate(-12 -11)"><rect x="5.500" y="5.500" width="11" height="11" fill="#f0f0f0" stroke="#111" stroke-width="1.200"/><path d="M3 3v16M19 3v16M3 3h16M3 19h16" stroke="#555" stroke-width="0.800" stroke-dasharray="2 2" fill="none"/></g></svg>
<svg style="left:35px;top:370px" width="24" height="22" viewBox="0 0 24 22"><g transform="translate(12 11) scale(0.86) translate(-12 -11)"><path d="M19 1l-9 10 3 3z" fill="#888" stroke="#111" stroke-width="1"/><path d="M10 11l-7 7 3-1 6-4z" fill="#111"/></g></svg>
<svg style="left:54px;top:386px" width="4" height="4" viewBox="0 0 4 4"><path d="M4 0v4h-4z" fill="#111"/></svg>
<svg style="left:10px;top:391px" width="24" height="22" viewBox="0 0 24 22"><g transform="translate(12 11) scale(0.86) translate(-12 -11)"><path d="M6 19c-2-3-4-6-4-8s2-1 3 1v-7c0-2 2-2 2 0v-2c0-2 2.500-2 2.500 0v1c0-2 2.500-2 2.500 0v2c0-2 2.500-1.500 2.500 0v8c0 3-1 4-2 5z" fill="#fff" stroke="#111" stroke-width="1.100"/></g></svg>
<svg style="left:29px;top:407px" width="4" height="4" viewBox="0 0 4 4"><path d="M4 0v4h-4z" fill="#111"/></svg>
<svg style="left:35px;top:391px" width="24" height="22" viewBox="0 0 24 22"><g transform="translate(12 11) scale(0.86) translate(-12 -11)"><circle cx="9" cy="8" r="6" fill="#e8e8e8" stroke="#111" stroke-width="1.500"/><path d="M13.500 12.500l7 7" stroke="#111" stroke-width="2.600"/></g></svg>
<svg style="left:10px;top:416px" width="24" height="22" viewBox="0 0 24 22"><g transform="translate(12 11) scale(0.86) translate(-12 -11)"><path d="M16 3l4 4-12 11-5 1 1-5z" fill="#fff" stroke="#111" stroke-width="1.300"/><path d="M13 6l4 4" stroke="#111" stroke-width="1.200"/></g></svg>
<div style="left:27px;top:458px;width:29px;height:29px;background:#fff;border:1px solid #000;box-shadow:0 0 0 1px #fff"></div>
<svg style="left:27px;top:458px" width="29" height="29" viewBox="0 0 29 29" ><rect x="9.500" y="9.500" width="10" height="10" fill="#d6d6d6" stroke="#000"/><path d="M1 28L28 1" stroke="#d9141e" stroke-width="2.200"/><rect x="0.500" y="0.500" width="28" height="28" fill="none" stroke="#000"/></svg>
<div style="left:13px;top:444px;width:29px;height:29px;background:#c6292f;border:1px solid #000;box-shadow:inset 0 0 0 1px #fff"></div>
<svg style="left:47px;top:443px" width="12" height="11" viewBox="0 0 12 11" ><path d="M2 2c4-1 7 2 7 6" fill="none" stroke="#222" stroke-width="1.300"/><path d="M0 3l3-3 1 4zM6.500 7l5 0-2.500 3.500z" fill="#222"/></svg>
<svg style="left:13px;top:476px" width="12" height="12" viewBox="0 0 12 12" ><rect x="4.500" y="4.500" width="6" height="6" fill="#fff" stroke="#000" stroke-width="1.600"/><rect x="0.500" y="0.500" width="6" height="6" fill="#fff" stroke="#000"/></svg>
<div style="left:9px;top:494px;width:16px;height:16px;border:1px solid #6e6e6e;border-radius:3px;background:#bdbdbd;box-shadow:inset 0 1px 1px #8a8a8a"></div>
<div style="left:12px;top:497px;width:10px;height:10px;background:#c6292f"></div>
<div style="left:29px;top:497px;width:10px;height:10px;background:linear-gradient(90deg,#fff,#444);border:1px solid #aaa"></div>
<svg style="left:47px;top:497px" width="10" height="10" viewBox="0 0 10 10" ><rect width="10" height="10" fill="#fff"/><path d="M0 10L10 0" stroke="#d9141e" stroke-width="2"/></svg>
<div style="left:9px;top:513px;width:17px;height:17px;border:1px solid #555;border-radius:3px;background:#c4c4c4;box-shadow:inset 0 1px 1px #8a8a8a"></div>
<svg style="left:11px;top:515px" width="14" height="14" viewBox="0 0 14 14" ><circle cx="6" cy="6" r="4.800" fill="#f4f4f4" stroke="#111" stroke-width="1.200"/><rect x="7" y="7" width="6" height="6" fill="#777" stroke="#111"/></svg>
<svg style="left:27px;top:515px" width="14" height="14" viewBox="0 0 14 14" ><rect x="6" y="6" width="7" height="7" fill="#555" stroke="#111"/><circle cx="6.500" cy="6.500" r="5" fill="#f4f4f4" stroke="#111" stroke-width="1.200"/></svg>
<svg style="left:45px;top:516px" width="12" height="12" viewBox="0 0 12 12" ><circle cx="5.500" cy="5.500" r="4.500" fill="#f0f0f0" stroke="#999"/><rect x="5.500" y="5.500" width="5" height="5" fill="#bbb" opacity="0.700"/></svg>
<svg style="left:24px;top:537px" width="24" height="17" viewBox="0 0 24 17" ><defs><linearGradient id="gr2" x1="0" y1="0" x2="1" y2="1"><stop offset="0" stop-color="#fff"/><stop offset="1" stop-color="#bdbdbd"/></linearGradient></defs><rect x="1" y="6" width="12" height="9" fill="url(#gr2)"/><path d="M1 15.500h13v-9" stroke="#111" stroke-width="1.200" fill="none"/><rect x="8" y="0.500" width="13" height="10" fill="url(#gr2)"/><path d="M8 11h14v-10" stroke="#111" stroke-width="1.200" fill="none"/></svg>
<div style="left:5px;top:38px;width:1910px;height:30px;background:#d6d6d6"></div>
<div style="left:9px;top:42px;width:1px;height:22px;background:repeating-linear-gradient(#9a9a9a 0 1px,transparent 1px 2px)"></div>
<div style="left:11px;top:42px;width:1px;height:22px;background:repeating-linear-gradient(#9a9a9a 0 1px,transparent 1px 2px)"></div>
<span class="t" style="left:19px;top:40px;">Gemischte Objekte</span>
<div style="left:117px;top:41px;width:22px;height:23px;background:#f0f0f0;border:1px solid #b4b4bc"></div>
<div style="left:119px;top:43px;width:18px;height:19px;background:#c6292f"></div>
<div style="left:139px;top:41px;width:12px;height:23px;background:linear-gradient(#f4f4f4,#e2e2e2);border:1px solid #b4b4bc"></div>
<svg style="left:141px;top:50px" width="8" height="5" viewBox="0 0 8 5"><path d="M0 0h7l-3.500 4z" fill="#555"/></svg>
<div style="left:156px;top:41px;width:22px;height:23px;background:#fff;border:1px solid #b4b4bc"></div>
<svg style="left:157px;top:42px" width="20" height="21" viewBox="0 0 20 21" ><rect x="5.500" y="6.500" width="9" height="9" fill="#fff" stroke="#000" stroke-width="1.300"/><path d="M1 20L19 1" stroke="#d9141e" stroke-width="1.800"/></svg>
<div style="left:177px;top:41px;width:12px;height:23px;background:linear-gradient(#f4f4f4,#e2e2e2);border:1px solid #b4b4bc"></div>
<svg style="left:179px;top:50px" width="8" height="5" viewBox="0 0 8 5"><path d="M0 0h7l-3.500 4z" fill="#555"/></svg>
<span class="t" style="left:200px;top:46px;color:#1010e0;">Kontur:</span>
<div style="left:200px;top:59px;width:33px;height:1px;background-image:linear-gradient(90deg,#1010e0 1px,transparent 1px);background-size:2px 1px"></div>
<div class="inp" style="left:237px;top:43px;width:63px;height:20px;"></div>
<div style="left:237px;top:43px;width:13px;height:20px;background:linear-gradient(#f6f6f6,#e0e0e0);border:1px solid #b4b4bc"></div>
<svg style="left:240px;top:46px" width="8" height="14" viewBox="0 0 8 14"><path d="M0 4.500h7l-3.500-4z M0 9.5h7l-3.500 4z" fill="#b8b8b8"/></svg>
<svg style="left:288px;top:50px" width="9" height="6" viewBox="0 0 9 6" ><path d="M0 0h8l-4 5z" fill="#000"/></svg>
<div class="inp" style="left:310px;top:42px;width:105px;height:21px;"></div>
<div style="left:403px;top:42px;width:12px;height:21px;background:linear-gradient(#f4f4f4,#e2e2e2);border:1px solid #b4b4bc"></div>
<svg style="left:405px;top:50px" width="8" height="5" viewBox="0 0 8 5"><path d="M0 0h7l-3.500 4z" fill="#555"/></svg>
<div class="inp" style="left:425px;top:42px;width:105px;height:21px;"></div>
<div style="left:518px;top:42px;width:12px;height:21px;background:linear-gradient(#f4f4f4,#e2e2e2);border:1px solid #b4b4bc"></div>
<svg style="left:520px;top:50px" width="8" height="5" viewBox="0 0 8 5"><path d="M0 0h7l-3.500 4z" fill="#555"/></svg>
<div style="left:432px;top:51px;width:44px;height:3px;background:#000"></div>
<span class="t" style="left:482px;top:46px;">Einfach</span>
<span class="t" style="left:540px;top:46px;">Stil:</span>
<div class="inp" style="left:569px;top:42px;width:32px;height:21px;"></div>
<div style="left:589px;top:42px;width:12px;height:21px;background:linear-gradient(#f4f4f4,#e2e2e2);border:1px solid #b4b4bc"></div>
<svg style="left:591px;top:50px" width="8" height="5" viewBox="0 0 8 5"><path d="M0 0h7l-3.500 4z" fill="#555"/></svg>
<span class="t" style="left:609px;top:46px;color:#1010e0;">Deckkr.:</span>
<div style="left:609px;top:59px;width:39px;height:1px;background-image:linear-gradient(90deg,#1010e0 1px,transparent 1px);background-size:2px 1px"></div>
<div class="inp" style="left:651px;top:43px;width:60px;height:20px;"></div>
<span class="t" style="left:657px;top:46px;">100</span>
<div style="left:696px;top:44px;width:14px;height:18px;background:linear-gradient(#f8f8f8,#e6e6e6)"></div>
<svg style="left:701px;top:48px" width="6" height="10" viewBox="0 0 6 10" ><path d="M0.500 0v9l4.500-4.500z" fill="#222"/></svg>
<span class="t" style="left:713px;top:46px;">%</span>
<svg style="left:735px;top:43px" width="26" height="20" viewBox="0 0 26 20" ><rect x="1.500" y="6.500" width="5" height="5" fill="#e8e8e8" stroke="#777" stroke-dasharray="1 1"/><rect x="7.500" y="1.500" width="5" height="5" fill="#e8e8e8" stroke="#777" stroke-dasharray="1 1"/><path d="M7 4v12l2.800-2.600 2.200 4.800 1.800-.8-2.200-4.700h3.800z" fill="#222"/><rect x="17.500" y="0.500" width="8" height="17" fill="#ececec" stroke="#999"/><path d="M19 7h5l-2.500 4z" fill="#222"/></svg>
<svg style="left:771px;top:45px" width="16" height="16" viewBox="0 0 16 16" ><circle cx="8" cy="8" r="6" fill="none" stroke="#9a9a9a" stroke-width="3.500" stroke-dasharray="1.500 0.800"/><circle cx="8" cy="8" r="7.500" fill="none" stroke="#bbb" stroke-width="0.600"/></svg>
<svg style="left:800px;top:44px" width="26" height="18" viewBox="0 0 26 18" ><rect x="1" y="1" width="12" height="15" fill="#e4e4e4" stroke="#000" stroke-width="1.300" stroke-dasharray="2.500 1.500"/><path d="M7 3.500l-1.800 2.500h3.600zM7 13.500l-1.800-2.500h3.600zM2.500 8.500l2.500-1.800v3.600zM11.500 8.500l-2.500-1.800v3.600z" fill="#000"/><path d="M17.500 7.500h5l-2.500 4.500z" fill="#222"/></svg>
<svg width="1" height="1" style="left:0;top:0"><defs><linearGradient id="ag" x1="0" y1="0" x2="0" y2="1"><stop offset="0" stop-color="#ffffff"/><stop offset="1" stop-color="#9c9c9c"/></linearGradient><linearGradient id="ah" x1="0" y1="0" x2="1" y2="0"><stop offset="0" stop-color="#ffffff"/><stop offset="1" stop-color="#9c9c9c"/></linearGradient></defs></svg>
<svg style="left:838px;top:46px;filter:drop-shadow(0 1px 0 rgba(255,255,255,.6))" width="18" height="15" viewBox="0 0 18 15" shape-rendering="crispEdges"><rect x="0" y="0" width="1" height="14" fill="#111"/><rect x="3" y="1" width="6" height="4" fill="url(#ag)"/><path d="M3.5 5V1.5H9" fill="none" stroke="#8c8c8c"/><path d="M3 5.5H9.5V1" fill="none" stroke="#1e1e1e"/><rect x="3" y="8" width="11" height="4" fill="url(#ag)"/><path d="M3.5 12V8.5H14" fill="none" stroke="#8c8c8c"/><path d="M3 12.5H14.5V8" fill="none" stroke="#1e1e1e"/></svg>
<svg style="left:857px;top:46px;filter:drop-shadow(0 1px 0 rgba(255,255,255,.6))" width="18" height="15" viewBox="0 0 18 15" shape-rendering="crispEdges"><rect x="8" y="0" width="1" height="14" fill="#111"/><rect x="5" y="1" width="6" height="4" fill="url(#ag)"/><path d="M5.5 5V1.5H11" fill="none" stroke="#8c8c8c"/><path d="M5 5.5H11.5V1" fill="none" stroke="#1e1e1e"/><rect x="2" y="8" width="12" height="4" fill="url(#ag)"/><path d="M2.5 12V8.5H14" fill="none" stroke="#8c8c8c"/><path d="M2 12.5H14.5V8" fill="none" stroke="#1e1e1e"/></svg>
<svg style="left:877px;top:46px;filter:drop-shadow(0 1px 0 rgba(255,255,255,.6))" width="18" height="15" viewBox="0 0 18 15" shape-rendering="crispEdges"><rect x="15" y="0" width="1" height="14" fill="#111"/><rect x="7" y="1" width="6" height="4" fill="url(#ag)"/><path d="M7.5 5V1.5H13" fill="none" stroke="#8c8c8c"/><path d="M7 5.5H13.5V1" fill="none" stroke="#1e1e1e"/><rect x="2" y="8" width="11" height="4" fill="url(#ag)"/><path d="M2.5 12V8.5H13" fill="none" stroke="#8c8c8c"/><path d="M2 12.5H13.5V8" fill="none" stroke="#1e1e1e"/></svg>
<svg style="left:905px;top:46px;filter:drop-shadow(0 1px 0 rgba(255,255,255,.6))" width="18" height="15" viewBox="0 0 18 15" shape-rendering="crispEdges"><rect x="0" y="1" width="17" height="1" fill="#111"/><rect x="3" y="3" width="4" height="9" fill="url(#ah)"/><path d="M3.5 12V3.5H7" fill="none" stroke="#8c8c8c"/><path d="M3 12.5H7.5V3" fill="none" stroke="#1e1e1e"/><rect x="10" y="3" width="4" height="4" fill="url(#ah)"/><path d="M10.5 7V3.5H14" fill="none" stroke="#8c8c8c"/><path d="M10 7.5H14.5V3" fill="none" stroke="#1e1e1e"/></svg>
<svg style="left:925px;top:46px;filter:drop-shadow(0 1px 0 rgba(255,255,255,.6))" width="18" height="15" viewBox="0 0 18 15" shape-rendering="crispEdges"><rect x="0" y="7" width="18" height="1" fill="#111"/><rect x="3" y="2" width="4" height="10" fill="url(#ah)"/><path d="M3.5 12V2.5H7" fill="none" stroke="#8c8c8c"/><path d="M3 12.5H7.5V2" fill="none" stroke="#1e1e1e"/><rect x="10" y="5" width="4" height="4" fill="url(#ah)"/><path d="M10.5 9V5.5H14" fill="none" stroke="#8c8c8c"/><path d="M10 9.5H14.5V5" fill="none" stroke="#1e1e1e"/></svg>
<svg style="left:945px;top:46px;filter:drop-shadow(0 1px 0 rgba(255,255,255,.6))" width="18" height="15" viewBox="0 0 18 15" shape-rendering="crispEdges"><rect x="0" y="13" width="17" height="1" fill="#111"/><rect x="3" y="2" width="4" height="10" fill="url(#ah)"/><path d="M3.5 12V2.5H7" fill="none" stroke="#8c8c8c"/><path d="M3 12.5H7.5V2" fill="none" stroke="#1e1e1e"/><rect x="10" y="8" width="4" height="4" fill="url(#ah)"/><path d="M10.5 12V8.5H14" fill="none" stroke="#8c8c8c"/><path d="M10 12.5H14.5V8" fill="none" stroke="#1e1e1e"/></svg>
<svg style="left:973px;top:46px;filter:drop-shadow(0 1px 0 rgba(255,255,255,.6))" width="18" height="15" viewBox="0 0 18 15" shape-rendering="crispEdges"><rect x="0" y="1" width="17" height="1" fill="#111"/><rect x="0" y="8" width="17" height="1" fill="#111"/><rect x="6" y="2" width="6" height="3" fill="url(#ag)"/><path d="M6.5 5V2.5H12" fill="none" stroke="#8c8c8c"/><path d="M6 5.5H12.5V2" fill="none" stroke="#1e1e1e"/><rect x="3" y="9" width="12" height="3" fill="url(#ag)"/><path d="M3.5 12V9.5H15" fill="none" stroke="#8c8c8c"/><path d="M3 12.5H15.5V9" fill="none" stroke="#1e1e1e"/></svg>
<svg style="left:993px;top:46px;filter:drop-shadow(0 1px 0 rgba(255,255,255,.6))" width="18" height="15" viewBox="0 0 18 15" shape-rendering="crispEdges"><rect x="0" y="3" width="17" height="1" fill="#111"/><rect x="0" y="10" width="17" height="1" fill="#111"/><rect x="6" y="1" width="6" height="4" fill="url(#ag)"/><path d="M6.5 5V1.5H12" fill="none" stroke="#8c8c8c"/><path d="M6 5.5H12.5V1" fill="none" stroke="#1e1e1e"/><rect x="3" y="8" width="12" height="4" fill="url(#ag)"/><path d="M3.5 12V8.5H15" fill="none" stroke="#8c8c8c"/><path d="M3 12.5H15.5V8" fill="none" stroke="#1e1e1e"/></svg>
<svg style="left:1013px;top:46px;filter:drop-shadow(0 1px 0 rgba(255,255,255,.6))" width="18" height="15" viewBox="0 0 18 15" shape-rendering="crispEdges"><rect x="0" y="6" width="17" height="1" fill="#111"/><rect x="0" y="13" width="17" height="1" fill="#111"/><rect x="6" y="2" width="6" height="3" fill="url(#ag)"/><path d="M6.5 5V2.5H12" fill="none" stroke="#8c8c8c"/><path d="M6 5.5H12.5V2" fill="none" stroke="#1e1e1e"/><rect x="3" y="9" width="12" height="3" fill="url(#ag)"/><path d="M3.5 12V9.5H15" fill="none" stroke="#8c8c8c"/><path d="M3 12.5H15.5V9" fill="none" stroke="#1e1e1e"/></svg>
<svg style="left:1042px;top:46px;filter:drop-shadow(0 1px 0 rgba(255,255,255,.6))" width="18" height="15" viewBox="0 0 18 15" shape-rendering="crispEdges"><rect x="1" y="0" width="1" height="14" fill="#111"/><rect x="8" y="0" width="1" height="14" fill="#111"/><rect x="2" y="2" width="4" height="9" fill="url(#ah)"/><path d="M2.5 11V2.5H6" fill="none" stroke="#8c8c8c"/><path d="M2 11.5H6.5V2" fill="none" stroke="#1e1e1e"/><rect x="9" y="5" width="3" height="4" fill="url(#ah)"/><path d="M9.5 9V5.5H12" fill="none" stroke="#8c8c8c"/><path d="M9 9.5H12.5V5" fill="none" stroke="#1e1e1e"/></svg>
<svg style="left:1061px;top:46px;filter:drop-shadow(0 1px 0 rgba(255,255,255,.6))" width="18" height="15" viewBox="0 0 18 15" shape-rendering="crispEdges"><rect x="4" y="0" width="1" height="14" fill="#111"/><rect x="11" y="0" width="1" height="14" fill="#111"/><rect x="2" y="2" width="4" height="9" fill="url(#ah)"/><path d="M2.5 11V2.5H6" fill="none" stroke="#8c8c8c"/><path d="M2 11.5H6.5V2" fill="none" stroke="#1e1e1e"/><rect x="10" y="5" width="3" height="4" fill="url(#ah)"/><path d="M10.5 9V5.5H13" fill="none" stroke="#8c8c8c"/><path d="M10 9.5H13.5V5" fill="none" stroke="#1e1e1e"/></svg>
<svg style="left:1081px;top:46px;filter:drop-shadow(0 1px 0 rgba(255,255,255,.6))" width="18" height="15" viewBox="0 0 18 15" shape-rendering="crispEdges"><rect x="6" y="0" width="1" height="14" fill="#111"/><rect x="13" y="0" width="1" height="14" fill="#111"/><rect x="1" y="2" width="4" height="9" fill="url(#ah)"/><path d="M1.5 11V2.5H5" fill="none" stroke="#8c8c8c"/><path d="M1 11.5H5.5V2" fill="none" stroke="#1e1e1e"/><rect x="9" y="5" width="3" height="4" fill="url(#ah)"/><path d="M9.5 9V5.5H12" fill="none" stroke="#8c8c8c"/><path d="M9 9.5H12.5V5" fill="none" stroke="#1e1e1e"/></svg>
<svg style="left:1110px;top:43px" width="19" height="19" viewBox="0 0 19 19" ><rect x="2.500" y="2.500" width="14" height="14" fill="none" stroke="#222" stroke-dasharray="1.500 1.500"/><rect x="1" y="1" width="3" height="3" fill="#fff" stroke="#333" stroke-width="0.800"/><rect x="1" y="8" width="3" height="3" fill="#fff" stroke="#333" stroke-width="0.800"/><rect x="1" y="15" width="3" height="3" fill="#fff" stroke="#333" stroke-width="0.800"/><rect x="8" y="1" width="3" height="3" fill="#fff" stroke="#333" stroke-width="0.800"/><rect x="7" y="7" width="5" height="5" fill="#111"/><rect x="8" y="15" width="3" height="3" fill="#fff" stroke="#333" stroke-width="0.800"/><rect x="15" y="1" width="3" height="3" fill="#fff" stroke="#333" stroke-width="0.800"/><rect x="15" y="8" width="3" height="3" fill="#fff" stroke="#333" stroke-width="0.800"/><rect x="15" y="15" width="3" height="3" fill="#fff" stroke="#333" stroke-width="0.800"/></svg>
<span class="t" style="left:1133px;top:46px;color:#1010e0;">x:</span>
<div style="left:1133px;top:59px;width:9px;height:1px;background-image:linear-gradient(90deg,#1010e0 1px,transparent 1px);background-size:2px 1px"></div>
<div class="inp" style="left:1148px;top:43px;width:74px;height:20px;"></div>
<div style="left:1148px;top:43px;width:13px;height:20px;background:linear-gradient(#f6f6f6,#e0e0e0);border:1px solid #b4b4bc"></div>
<svg style="left:1151px;top:46px" width="8" height="14" viewBox="0 0 8 14"><path d="M0 4.500h7l-3.500-4z M0 9.5h7l-3.500 4z" fill="#4a62c8"/></svg>
<span class="t" style="left:1168px;top:46px;font-size:10px;transform:scaleX(.93)">76,495 mm</span>
<span class="t" style="left:1230px;top:46px;color:#1010e0;">y:</span>
<div style="left:1230px;top:59px;width:9px;height:1px;background-image:linear-gradient(90deg,#1010e0 1px,transparent 1px);background-size:2px 1px"></div>
<div class="inp" style="left:1243px;top:43px;width:74px;height:20px;"></div>
<div style="left:1243px;top:43px;width:13px;height:20px;background:linear-gradient(#f6f6f6,#e0e0e0);border:1px solid #b4b4bc"></div>
<svg style="left:1246px;top:46px" width="8" height="14" viewBox="0 0 8 14"><path d="M0 4.500h7l-3.500-4z M0 9.5h7l-3.500 4z" fill="#4a62c8"/></svg>
<span class="t" style="left:1263px;top:46px;font-size:10px;transform:scaleX(.93)">59,696 mm</span>
<span class="t" style="left:1324px;top:46px;color:#1010e0;">B:</span>
<div style="left:1324px;top:59px;width:10px;height:1px;background-image:linear-gradient(90deg,#1010e0 1px,transparent 1px);background-size:2px 1px"></div>
<div class="inp" style="left:1340px;top:43px;width:74px;height:20px;"></div>
<div style="left:1340px;top:43px;width:13px;height:20px;background:linear-gradient(#f6f6f6,#e0e0e0);border:1px solid #b4b4bc"></div>
<svg style="left:1343px;top:46px" width="8" height="14" viewBox="0 0 8 14"><path d="M0 4.500h7l-3.500-4z M0 9.5h7l-3.500 4z" fill="#4a62c8"/></svg>
<span class="t" style="left:1360px;top:46px;font-size:10px;transform:scaleX(.93)">114,997 mm</span>
<span class="t" style="left:1436px;top:46px;color:#1010e0;">H:</span>
<div style="left:1436px;top:59px;width:10px;height:1px;background-image:linear-gradient(90deg,#1010e0 1px,transparent 1px);background-size:2px 1px"></div>
<div class="inp" style="left:1449px;top:43px;width:74px;height:20px;"></div>
<div style="left:1449px;top:43px;width:13px;height:20px;background:linear-gradient(#f6f6f6,#e0e0e0);border:1px solid #b4b4bc"></div>
<svg style="left:1452px;top:46px" width="8" height="14" viewBox="0 0 8 14"><path d="M0 4.500h7l-3.500-4z M0 9.5h7l-3.500 4z" fill="#4a62c8"/></svg>
<span class="t" style="left:1469px;top:46px;font-size:10px;transform:scaleX(.93)">49,093 mm</span>
<svg style="left:1417px;top:44px" width="17" height="18" viewBox="0 0 17 18" ><path d="M0 9h17" stroke="#222" stroke-width="1.200"/><rect x="5.500" y="1.500" width="6" height="15" rx="3" fill="#c8c8c8" stroke="#222" stroke-width="1.300"/><path d="M8.500 5v8" stroke="#222" stroke-width="1.200"/></svg>
<svg style="left:1900px;top:41px" width="14" height="9" viewBox="0 0 14 9" ><path d="M0 2h4l-2 3z" fill="#333"/><path d="M6 1.500h8M6 4.500h8M6 7.500h8" stroke="#444" stroke-width="1.200"/></svg>
<div style="left:1700px;top:69px;width:215px;height:966px;background:#3a3a3a"></div>
<div style="left:1700px;top:69px;width:1px;height:966px;background:#2a2a2a"></div>
<div style="left:1701px;top:69px;width:214px;height:12px;background:linear-gradient(#5a5a5a,#3c3c3c)"></div>
<svg style="left:1900px;top:71px" width="12" height="8" viewBox="0 0 12 8" ><path d="M1 0v7l4-3.500zM6 0v7l4-3.500z" fill="#d8d8d8"/></svg>
<div style="left:1701px;top:81px;width:214px;height:17px;background:linear-gradient(#9c9c9c,#8a8a8a);border-bottom:1px solid #6a6a6a"></div>
<div style="left:1701px;top:81px;width:50px;height:18px;background:linear-gradient(#e6e6e6,#d6d6d6);border-right:1px solid #7a7a7a"></div>
<svg style="left:1706px;top:85px" width="6" height="9" viewBox="0 0 6 9"><path d="M0.500 3.500l2.500-3 2.500 3zM0.500 5.500l2.500 3 2.500-3z" fill="#222"/></svg>
<span class="b" style="left:1714px;top:83px;color:#222">Farbe</span>
<div style="left:1751px;top:81px;width:61px;height:17px;background:linear-gradient(#a6a6a6,#949494);border-right:1px solid #747474;border-bottom:1px solid #6a6a6a;border-left:1px solid #b4b4b4"></div>
<span class="b" style="left:1758px;top:83px;color:#2e2e2e">Farbfelder</span>
<div style="left:1812px;top:81px;width:57px;height:17px;background:linear-gradient(#a6a6a6,#949494);border-right:1px solid #747474;border-bottom:1px solid #6a6a6a;border-left:1px solid #b4b4b4"></div>
<span class="b" style="left:1819px;top:83px;color:#2e2e2e">Farbhilfe</span>
<svg style="left:1897px;top:85px" width="15" height="9" viewBox="0 0 15 9"><path d="M0 2h4l-2 3z" fill="#333"/><path d="M6 1.500h8M6 4.500h8M6 7.500h8" stroke="#444" stroke-width="1.200"/></svg>
<div style="left:1701px;top:98px;width:214px;height:101px;background:#d6d6d6"></div>
<div style="left:1714px;top:114px;width:20px;height:19px;background:#fff;border:1px solid #000"></div>
<svg style="left:1714px;top:114px" width="20" height="19" viewBox="0 0 20 19" ><rect x="5.500" y="5.500" width="8" height="8" fill="#d6d6d6" stroke="#000"/><path d="M1 18L19 1" stroke="#d9141e" stroke-width="2"/></svg>
<div style="left:1705px;top:105px;width:19px;height:19px;background:#c6292f;border:1px solid #000"></div>
<svg style="left:1706px;top:139px" width="12" height="13" viewBox="0 0 12 13" ><path d="M6 1l5 2.500v6l-5 2.500-5-2.500v-6z" fill="#f4f4f4" stroke="#222"/><path d="M1 3.500l5 2.500 5-2.500M6 6v6" stroke="#222" fill="none"/><path d="M1 3.500l5 2.500v6l-5-2.500z" fill="#999"/></svg>
<div style="left:1721px;top:139px;width:14px;height:13px;background:#c8383c;border:1px solid #000"></div>
<span class="t" style="left:1742px;top:103px;width:10px;text-align:center;transform-origin:50% 50%">C</span>
<div style="left:1756px;top:105px;width:103px;height:8px;background:linear-gradient(90deg,#d1232a,#c73a40 40%,#3a3a40);border:1px solid #111;border-bottom-width:2px"></div>
<svg style="left:1762px;top:112px" width="10" height="6" viewBox="0 0 10 6"><path d="M0.500 5.500h9l-4.500-5z" fill="#e8e8e0" stroke="#8a8a80" stroke-width="0.800"/></svg>
<div style="left:1864px;top:101px;width:33px;height:17px;background:#fff;border:1px solid #e8e8e8"></div>
<span class="t" style="left:1869px;top:103px;font-size:10.5px;transform:scaleX(.88)">10,02</span>
<span class="t" style="left:1900px;top:103px;">%</span>
<span class="t" style="left:1742px;top:121px;width:10px;text-align:center;transform-origin:50% 50%">M</span>
<div style="left:1756px;top:123px;width:103px;height:8px;background:linear-gradient(90deg,#f0e520,#e8a030 50%,#c8232a);border:1px solid #111;border-bottom-width:2px"></div>
<svg style="left:1847px;top:130px" width="10" height="6" viewBox="0 0 10 6"><path d="M0.500 5.500h9l-4.500-5z" fill="#e8e8e0" stroke="#8a8a80" stroke-width="0.800"/></svg>
<div style="left:1864px;top:119px;width:33px;height:17px;background:#fff;border:1px solid #e8e8e8"></div>
<span class="t" style="left:1869px;top:121px;font-size:10.5px;transform:scaleX(.88)">95,14</span>
<span class="t" style="left:1900px;top:121px;">%</span>
<span class="t" style="left:1742px;top:139px;width:10px;text-align:center;transform-origin:50% 50%">Y</span>
<div style="left:1756px;top:141px;width:103px;height:8px;background:linear-gradient(90deg,#d6188c,#d8264a 60%,#cc3a20);border:1px solid #111;border-bottom-width:2px"></div>
<svg style="left:1841px;top:148px" width="10" height="6" viewBox="0 0 10 6"><path d="M0.500 5.500h9l-4.500-5z" fill="#e8e8e0" stroke="#8a8a80" stroke-width="0.800"/></svg>
<div style="left:1864px;top:137px;width:33px;height:17px;background:#fff;border:1px solid #e8e8e8"></div>
<span class="t" style="left:1869px;top:139px;font-size:10.5px;transform:scaleX(.88)">88,71</span>
<span class="t" style="left:1900px;top:139px;">%</span>
<span class="t" style="left:1742px;top:157px;width:10px;text-align:center;transform-origin:50% 50%">K</span>
<div style="left:1756px;top:159px;width:103px;height:8px;background:linear-gradient(90deg,#cc2a30,#8a1c1c 55%,#1a0a08);border:1px solid #111;border-bottom-width:2px"></div>
<svg style="left:1754px;top:166px" width="10" height="6" viewBox="0 0 10 6"><path d="M0.500 5.500h9l-4.500-5z" fill="#e8e8e0" stroke="#8a8a80" stroke-width="0.800"/></svg>
<div style="left:1864px;top:155px;width:33px;height:17px;background:#fff;border:1px solid #e8e8e8"></div>
<span class="t" style="left:1869px;top:157px;font-size:10.5px;transform:scaleX(.88)">1,72</span>
<span class="t" style="left:1900px;top:157px;">%</span>
<div style="left:1705px;top:173px;width:202px;height:18px;background:#000"></div>
<div style="left:1706px;top:174px;width:17px;height:16px;background:#fff"></div>
<svg style="left:1706px;top:174px" width="17" height="16" viewBox="0 0 17 16" ><path d="M0 16L17 0" stroke="#d9141e" stroke-width="1.800"/></svg>
<div style="left:1723px;top:174px;width:167px;height:16px;background:linear-gradient(rgba(255,255,255,.55),rgba(255,255,255,0) 45%,rgba(0,0,0,0) 55%,rgba(0,0,0,.95)),linear-gradient(90deg,#e01010,#f0e000 17%,#20b030 34%,#20b0e8 52%,#2030a0 68%,#c018a0 88%,#e01030)"></div>
<div style="left:1890px;top:174px;width:16px;height:8px;background:#fff"></div>
<div style="left:1890px;top:182px;width:16px;height:8px;background:#000"></div>
<div style="left:1701px;top:199px;width:214px;height:4px;background:#3a3a3a"></div>
<div style="left:1701px;top:203px;width:214px;height:16px;background:linear-gradient(#9c9c9c,#8a8a8a);border-bottom:1px solid #6a6a6a"></div>
<div style="left:1701px;top:203px;width:42px;height:17px;background:linear-gradient(#e6e6e6,#d6d6d6);border-right:1px solid #7a7a7a"></div>
<span class="b" style="left:1708px;top:205px;color:#222">Pinsel</span>
<div style="left:1743px;top:203px;width:55px;height:16px;background:linear-gradient(#a6a6a6,#949494);border-right:1px solid #747474;border-bottom:1px solid #6a6a6a;border-left:1px solid #b4b4b4"></div>
<span class="b" style="left:1750px;top:205px;color:#2e2e2e">Symbole</span>
<div style="left:1798px;top:203px;width:64px;height:16px;background:linear-gradient(#a6a6a6,#949494);border-right:1px solid #747474;border-bottom:1px solid #6a6a6a;border-left:1px solid #b4b4b4"></div>
<span class="b" style="left:1805px;top:205px;color:#2e2e2e">Grafikstile</span>
<svg style="left:1897px;top:207px" width="15" height="9" viewBox="0 0 15 9"><path d="M0 2h4l-2 3z" fill="#333"/><path d="M6 1.500h8M6 4.500h8M6 7.500h8" stroke="#444" stroke-width="1.200"/></svg>
<div style="left:1701px;top:220px;width:214px;height:210px;background:#d6d6d6"></div>
<div style="left:1702px;top:220px;width:196px;height:193px;background:#fff"></div>
<div style="left:1734px;top:220px;width:1px;height:32px;background:#000"></div>
<div style="left:1766px;top:220px;width:1px;height:32px;background:#000"></div>
<div style="left:1798px;top:220px;width:1px;height:32px;background:#000"></div>
<div style="left:1830px;top:220px;width:1px;height:32px;background:#000"></div>
<div style="left:1862px;top:220px;width:1px;height:32px;background:#000"></div>
<div style="left:1894px;top:220px;width:1px;height:32px;background:#000"></div>
<div style="left:1702px;top:252px;width:196px;height:1px;background:#000"></div>
<div style="left:1702px;top:284px;width:196px;height:1px;background:#000"></div>
<div style="left:1702px;top:316px;width:196px;height:1px;background:#000"></div>
<div style="left:1702px;top:348px;width:196px;height:1px;background:#000"></div>
<div style="left:1702px;top:380px;width:196px;height:1px;background:#000"></div>
<div style="left:1702px;top:412px;width:196px;height:1px;background:#000"></div>
<svg style="left:1702px;top:220px" width="196" height="193" viewBox="0 0 196 193" ><ellipse cx="16" cy="16.500" rx="1.200" ry="0.700" fill="#000"/>
<ellipse cx="48" cy="16.500" rx="2.800" ry="1.500" transform="rotate(15 48 16.500)" fill="#000"/>
<path d="M80 14v5" stroke="#bbb" stroke-width="0.700"/>
<path d="M112 14.500l1.500 2-1.500 2-1.500-2z" fill="#000"/>
<circle cx="144" cy="16.500" r="3.600" fill="#000"/><circle cx="176" cy="16.500" r="7.800" fill="#000"/>
<rect x="6" y="46.500" width="148" height="3" fill="#000"/>
<path d="M6 80.300C40 78.600 80 79 120 78.300S172 77.800 190 79.400C172 80.800 150 80.600 125 81.200S90 81.600 60 81.800S25 82 6 80.300Z" fill="#000"/>
<path d="M6 112.600C16 109.200 30 108.200 50 108.200H150C170 108.200 182 110 190 112.600C182 115.500 170 117 150 117H50C30 117 16 116 6 112.600Z" fill="#000"/>
<path d="M6.400 145C20 143.500 36 142.200 50 141.800S78 141.800 89 142S104 142.200 111 141.100C108 139.500 110 138 112.200 137.900S116 136.800 118.700 137.200S123 138.600 124.500 139.200L127.800 139.800C134 138.400 141 136 147.200 134.600S156 133.600 160.200 134.200S163 136.500 163.500 137.900C167 136.800 170 136.800 173.200 137.200S181 139 184.900 141.800S189.500 146.500 190 149.600C187 147.600 183.500 146.200 179.700 145.700S167 144.500 160.200 145S147 146.800 140.800 147.600S127 149.200 121.300 149.600C121.500 151.500 120.500 152.800 118.700 153.400S114.500 154.400 112.200 154.100S105 151.500 101.800 149.600S98.500 147.600 96.600 147S94 147.400 92.700 147S91.400 145.600 90.800 145C82 144.600 72 143.900 62.900 143.700S46 143.900 36.900 144.400S16 145.800 6.400 145.600Z" fill="#000"/>
</svg>
<span class="t" style="left:1863px;top:262px;">Einfach</span>
<svg style="left:1702px;top:381px" width="196" height="31" viewBox="0 0 196 31" ><g fill="none">
<path d="M14.500 31V18.500q0-3.500 3.500-3.500H31.500" stroke="#1c1c1c" stroke-width="7.600"/><path d="M14.500 31V18.500q0-3.500 3.500-3.500H31.500" stroke="#cf1f2b" stroke-width="4"/>
<path d="M33 15H63.500M65.200 15H95.600" stroke="#1c1c1c" stroke-width="7.600"/><path d="M33 15H63.500M65.200 15H95.600" stroke="#cf1f2b" stroke-width="4"/>
<path d="M97.700 16.500H110q3.500 0 3.500-3.500V0" stroke="#1c1c1c" stroke-width="7.600"/><path d="M97.700 16.500H110q3.500 0 3.500-3.500V0" stroke="#cf1f2b" stroke-width="4"/>
<path d="M129 15.800H171" stroke="#1c1c1c" stroke-width="7.600"/><path d="M132 15.800H171" stroke="#cf1f2b" stroke-width="4"/>
</g><path d="M170.500 3L191.400 15.400L170.500 28Z" fill="#b81c26" stroke="#3a0c10" stroke-width="1"/><path d="M170.500 13.800h8v4h-8z" fill="#cf1f2b"/></svg>
<div style="left:1734px;top:381px;width:1px;height:3px;background:#000"></div>
<div style="left:1734px;top:409px;width:1px;height:3px;background:#000"></div>
<div style="left:1766px;top:381px;width:1px;height:3px;background:#000"></div>
<div style="left:1766px;top:409px;width:1px;height:3px;background:#000"></div>
<div style="left:1798px;top:381px;width:1px;height:3px;background:#000"></div>
<div style="left:1798px;top:409px;width:1px;height:3px;background:#000"></div>
<div style="left:1830px;top:381px;width:1px;height:3px;background:#000"></div>
<div style="left:1830px;top:409px;width:1px;height:3px;background:#000"></div>
<div style="left:1862px;top:381px;width:1px;height:3px;background:#000"></div>
<div style="left:1862px;top:409px;width:1px;height:3px;background:#000"></div>
<div style="left:1702px;top:411px;width:196px;height:2px;background:#000"></div>
<div style="left:1899px;top:220px;width:14px;height:193px;background:#ececec"></div>
<svg style="left:1902px;top:225px" width="9" height="5" viewBox="0 0 9 5" ><path d="M0 4.500h8l-4-4.500z" fill="#444"/></svg>
<svg style="left:1902px;top:401px" width="9" height="5" viewBox="0 0 9 5" ><path d="M0 0h8l-4 4.500z" fill="#444"/></svg>
<div style="left:1899px;top:239px;width:14px;height:14px;background:linear-gradient(90deg,#fafafa,#d8d8d8);border:1px solid #9a9a9a;border-radius:2px"></div>
<svg style="left:1711px;top:415px" width="20" height="14" viewBox="0 0 20 14" ><rect x="1.500" y="1.500" width="8" height="7" fill="#ddd" stroke="#555"/><rect x="3.500" y="3.500" width="8" height="7" fill="#eee" stroke="#444"/><path d="M5 5.500h5M5 7.500h5M7.500 4v6" stroke="#666" stroke-width="0.800"/><path d="M16 8v4h-4z" fill="#111"/></svg>
<svg style="left:1779px;top:416px" width="13" height="11" viewBox="0 0 13 11" ><path d="M1 1l10 9M11 1l-10 9" stroke="#a8a8a8" stroke-width="1.400"/></svg>
<svg style="left:1805px;top:416px" width="24" height="11" viewBox="0 0 24 11" ><path d="M1 10l9-9" stroke="#a8a8a8" stroke-width="1.800"/><path d="M12 3h11M12 6.500h11M14 10h7" stroke="#a8a8a8" stroke-width="1.200"/></svg>
<svg style="left:1848px;top:416px" width="12" height="11" viewBox="0 0 12 11" ><rect x="0.500" y="0.500" width="9" height="9" fill="#f4f4f4" stroke="#888"/><path d="M3 9.500h7v-7" stroke="#111" stroke-width="1.400" fill="none"/><rect x="3" y="4" width="4" height="4" fill="#555"/></svg>
<svg style="left:1878px;top:415px" width="11" height="13" viewBox="0 0 11 13" ><path d="M1.500 3.500h8l-1 8.500h-6z" fill="#e8e8e8" stroke="#333"/><path d="M0.500 3h10" stroke="#333" stroke-width="1.300"/><path d="M3.500 1.500h4" stroke="#333" stroke-width="1.300"/><path d="M4 5v5.500M5.500 5v5.500M7 5v5.500" stroke="#555" stroke-width="0.800"/></svg>
<svg style="left:1905px;top:421px" width="8" height="8" viewBox="0 0 8 8" ><path d="M7 1v1M5 3h1M7 3v1M3 5h1M5 5h1M7 5v1M1 7h1M3 7h1M5 7h1M7 7v1" stroke="#999"/></svg>
<div style="left:1701px;top:430px;width:214px;height:4px;background:#3a3a3a"></div>
<div style="left:1701px;top:434px;width:214px;height:17px;background:linear-gradient(#9c9c9c,#8a8a8a);border-bottom:1px solid #6a6a6a"></div>
<div style="left:1701px;top:434px;width:47px;height:18px;background:linear-gradient(#e6e6e6,#d6d6d6);border-right:1px solid #7a7a7a"></div>
<span class="b" style="left:1708px;top:436px;color:#222">Ebenen</span>
<div style="left:1748px;top:434px;width:51px;height:17px;background:linear-gradient(#a6a6a6,#949494);border-right:1px solid #747474;border-bottom:1px solid #6a6a6a;border-left:1px solid #b4b4b4"></div>
<span class="b" style="left:1755px;top:436px;color:#2e2e2e">Zeichen</span>
<div style="left:1799px;top:434px;width:46px;height:17px;background:linear-gradient(#a6a6a6,#949494);border-right:1px solid #747474;border-bottom:1px solid #6a6a6a;border-left:1px solid #b4b4b4"></div>
<span class="b" style="left:1806px;top:436px;color:#2e2e2e">Absatz</span>
<svg style="left:1897px;top:438px" width="15" height="9" viewBox="0 0 15 9"><path d="M0 2h4l-2 3z" fill="#333"/><path d="M6 1.500h8M6 4.500h8M6 7.500h8" stroke="#444" stroke-width="1.200"/></svg>
<div style="left:1701px;top:452px;width:214px;height:324px;background:#d6d6d6"></div>
<div style="left:1702px;top:452px;width:196px;height:1px;background:#222"></div>
<div style="left:1702px;top:453px;width:46px;height:20px;background:#d6d6d6;border-bottom:1px solid #b0b0b0"></div>
<div style="left:1706px;top:455px;width:14px;height:16px;border:1px solid #b0b0b0;border-right-color:#f4f4f4;border-bottom-color:#f4f4f4;background:#dadada"></div>
<div style="left:1722px;top:455px;width:14px;height:16px;border:1px solid #b0b0b0;border-right-color:#f4f4f4;border-bottom-color:#f4f4f4;background:#dadada"></div>
<svg style="left:1707px;top:459px" width="12" height="8" viewBox="0 0 15 10"><path d="M1 5.500c3-5 10-5 13 0c-3 4.500-10 4.500-13 0z" fill="#fff" stroke="#111" stroke-width="1.200"/><circle cx="7.500" cy="5.300" r="2.800" fill="#111"/><circle cx="6.600" cy="4.400" r="0.900" fill="#fff"/><path d="M1 4c3-4.500 10-4.500 13 0" stroke="#111" stroke-width="1.600" fill="none"/></svg>
<div style="left:1739px;top:454px;width:4px;height:18px;background:#0f8a45"></div>
<div style="left:1747px;top:453px;width:1px;height:20px;background:#222"></div>
<div style="left:1748px;top:453px;width:150px;height:20px;background:#d6d6d6;border-bottom:1px solid #aaa"></div>
<svg style="left:1752px;top:459px" width="10" height="8" viewBox="0 0 10 8"><path d="M0.500 0.500h9l-4.500 6.500z" fill="#f0f0f8" stroke="#5a6a9a"/></svg>
<svg style="left:1765px;top:455px" width="16" height="16" viewBox="0 0 16 16"><rect x="0.500" y="0.500" width="15" height="15" fill="#fff" stroke="#000"/><rect x="3" y="8" width="2" height="2" fill="#c6292f"/><rect x="7" y="6" width="2" height="2" fill="#c6292f"/><rect x="11" y="9" width="3" height="3" fill="#c6292f"/></svg>
<span class="t" style="left:1785px;top:456px;">Meine Ebene</span>
<svg style="left:1873px;top:458px" width="11" height="11" viewBox="0 0 11 11"><circle cx="5.500" cy="5.500" r="4.300" fill="#f8f8f8" stroke="#333" stroke-width="1"/></svg>
<div style="left:1890px;top:460px;width:5px;height:5px;background:#0f8a45"></div>
<svg style="left:1892px;top:453px" width="6" height="6" viewBox="0 0 6 6"><path d="M0 0h6v6z" fill="#111"/></svg>
<div style="left:1702px;top:473px;width:46px;height:20px;background:#d6d6d6;border-bottom:1px solid #b0b0b0"></div>
<div style="left:1706px;top:475px;width:14px;height:16px;border:1px solid #b0b0b0;border-right-color:#f4f4f4;border-bottom-color:#f4f4f4;background:#dadada"></div>
<div style="left:1722px;top:475px;width:14px;height:16px;border:1px solid #b0b0b0;border-right-color:#f4f4f4;border-bottom-color:#f4f4f4;background:#dadada"></div>
<div style="left:1739px;top:474px;width:4px;height:18px;background:#0f8a45"></div>
<div style="left:1747px;top:473px;width:1px;height:20px;background:#222"></div>
<div style="left:1748px;top:473px;width:150px;height:20px;background:#fff"></div>
<div style="left:1763px;top:492px;width:135px;height:1px;background:#999"></div>
<svg style="left:1767px;top:478px" width="8" height="11" viewBox="0 0 8 11"><path d="M0.500 0.500v9l6-4.500z" fill="#f0f0f8" stroke="#5a6a9a"/></svg>
<svg style="left:1780px;top:475px" width="16" height="16" viewBox="0 0 16 16"><rect x="0.500" y="0.500" width="15" height="15" fill="#fbe9e6" stroke="#000"/><rect x="2" y="3" width="12" height="10" fill="#e58a80" opacity="0.700"/><path d="M3 5h10M3 8h10M3 11h10M5 3v10M8 3v10M11 3v10" stroke="#fff" stroke-width="0.800"/></svg>
<span class="t" style="left:1800px;top:476px;">Vorderseite</span>
<svg style="left:1873px;top:478px" width="11" height="11" viewBox="0 0 11 11"><circle cx="5.500" cy="5.500" r="4.300" fill="#f8f8f8" stroke="#333" stroke-width="1"/></svg>
<div style="left:1702px;top:493px;width:46px;height:20px;background:#d6d6d6;border-bottom:1px solid #b0b0b0"></div>
<div style="left:1706px;top:495px;width:14px;height:16px;border:1px solid #b0b0b0;border-right-color:#f4f4f4;border-bottom-color:#f4f4f4;background:#dadada"></div>
<div style="left:1722px;top:495px;width:14px;height:16px;border:1px solid #b0b0b0;border-right-color:#f4f4f4;border-bottom-color:#f4f4f4;background:#dadada"></div>
<svg style="left:1707px;top:499px" width="12" height="8" viewBox="0 0 15 10"><path d="M1 5.500c3-5 10-5 13 0c-3 4.500-10 4.500-13 0z" fill="#fff" stroke="#111" stroke-width="1.200"/><circle cx="7.500" cy="5.300" r="2.800" fill="#111"/><circle cx="6.600" cy="4.400" r="0.900" fill="#fff"/><path d="M1 4c3-4.500 10-4.500 13 0" stroke="#111" stroke-width="1.600" fill="none"/></svg>
<div style="left:1739px;top:494px;width:4px;height:18px;background:#0f8a45"></div>
<div style="left:1747px;top:493px;width:1px;height:20px;background:#222"></div>
<div style="left:1748px;top:493px;width:150px;height:20px;background:#fff"></div>
<div style="left:1763px;top:512px;width:135px;height:1px;background:#999"></div>
<svg style="left:1780px;top:495px" width="16" height="16" viewBox="0 0 16 16"><rect x="1" y="0" width="15" height="16" fill="#c6292f"/><path d="M3 8h8M10 6l3 2-3 2z" stroke="#fff" stroke-width="1.200" fill="#fff"/></svg>
<span class="t" style="left:1800px;top:496px;">Gerader Pfeil</span>
<svg style="left:1872px;top:496px" width="14" height="14" viewBox="0 0 14 14"><circle cx="7" cy="7" r="6" fill="#f4f4f4" stroke="#333" stroke-width="1"/><circle cx="7" cy="7" r="3.600" fill="#fff" stroke="#333" stroke-width="1"/></svg>
<div style="left:1889px;top:498px;width:9px;height:10px;background:#0f8a45;border:1px solid #0a5a2c"></div>
<div style="left:1702px;top:513px;width:46px;height:20px;background:#d6d6d6;border-bottom:1px solid #b0b0b0"></div>
<div style="left:1706px;top:515px;width:14px;height:16px;border:1px solid #b0b0b0;border-right-color:#f4f4f4;border-bottom-color:#f4f4f4;background:#dadada"></div>
<div style="left:1722px;top:515px;width:14px;height:16px;border:1px solid #b0b0b0;border-right-color:#f4f4f4;border-bottom-color:#f4f4f4;background:#dadada"></div>
<svg style="left:1707px;top:519px" width="12" height="8" viewBox="0 0 15 10"><path d="M1 5.500c3-5 10-5 13 0c-3 4.500-10 4.500-13 0z" fill="#fff" stroke="#111" stroke-width="1.200"/><circle cx="7.500" cy="5.300" r="2.800" fill="#111"/><circle cx="6.600" cy="4.400" r="0.900" fill="#fff"/><path d="M1 4c3-4.500 10-4.500 13 0" stroke="#111" stroke-width="1.600" fill="none"/></svg>
<div style="left:1739px;top:514px;width:4px;height:18px;background:#0f8a45"></div>
<div style="left:1747px;top:513px;width:1px;height:20px;background:#222"></div>
<div style="left:1748px;top:513px;width:150px;height:20px;background:#fff"></div>
<div style="left:1763px;top:532px;width:135px;height:1px;background:#999"></div>
<svg style="left:1780px;top:515px" width="16" height="16" viewBox="0 0 16 16"><rect x="1" y="0" width="15" height="16" fill="#c6292f"/><path d="M13 3v8h-8" stroke="#fff" stroke-width="1.300" fill="none"/><path d="M6 9l-3 2 3 2z" fill="#fff"/></svg>
<span class="t" style="left:1800px;top:516px;">Gekrümmter ...</span>
<svg style="left:1872px;top:516px" width="14" height="14" viewBox="0 0 14 14"><circle cx="7" cy="7" r="6" fill="#f4f4f4" stroke="#333" stroke-width="1"/><circle cx="7" cy="7" r="3.600" fill="#fff" stroke="#333" stroke-width="1"/></svg>
<div style="left:1889px;top:518px;width:9px;height:10px;background:#0f8a45;border:1px solid #0a5a2c"></div>
<div style="left:1702px;top:533px;width:46px;height:20px;background:#d6d6d6;border-bottom:1px solid #b0b0b0"></div>
<div style="left:1706px;top:535px;width:14px;height:16px;border:1px solid #b0b0b0;border-right-color:#f4f4f4;border-bottom-color:#f4f4f4;background:#dadada"></div>
<div style="left:1722px;top:535px;width:14px;height:16px;border:1px solid #b0b0b0;border-right-color:#f4f4f4;border-bottom-color:#f4f4f4;background:#dadada"></div>
<svg style="left:1707px;top:539px" width="12" height="8" viewBox="0 0 15 10"><path d="M1 5.500c3-5 10-5 13 0c-3 4.500-10 4.500-13 0z" fill="#fff" stroke="#111" stroke-width="1.200"/><circle cx="7.500" cy="5.300" r="2.800" fill="#111"/><circle cx="6.600" cy="4.400" r="0.900" fill="#fff"/><path d="M1 4c3-4.500 10-4.500 13 0" stroke="#111" stroke-width="1.600" fill="none"/></svg>
<div style="left:1739px;top:534px;width:4px;height:18px;background:#0f8a45"></div>
<div style="left:1747px;top:533px;width:1px;height:20px;background:#222"></div>
<div style="left:1748px;top:533px;width:150px;height:20px;background:#fff"></div>
<div style="left:1763px;top:552px;width:135px;height:1px;background:#999"></div>
<svg style="left:1767px;top:538px" width="8" height="11" viewBox="0 0 8 11"><path d="M0.500 0.500v9l6-4.500z" fill="#f0f0f8" stroke="#5a6a9a"/></svg>
<svg style="left:1780px;top:535px" width="16" height="16" viewBox="0 0 16 16"><rect x="1" y="0" width="15" height="16" fill="#c6292f"/><path d="M8.500 5c-1.500-2-5-1.500-5 1.500c0 3 3 5 5 6.500c2-1.500 5-3.500 5-6.500c0-3-3.500-3.500-5-1.500z" fill="none" stroke="#fff" stroke-width="1.600"/></svg>
<span class="t" style="left:1800px;top:536px;">Herz</span>
<svg style="left:1872px;top:536px" width="14" height="14" viewBox="0 0 14 14"><circle cx="7" cy="7" r="6" fill="#f4f4f4" stroke="#333" stroke-width="1"/><circle cx="7" cy="7" r="3.600" fill="#fff" stroke="#333" stroke-width="1"/></svg>
<div style="left:1889px;top:538px;width:9px;height:10px;background:#0f8a45;border:1px solid #0a5a2c"></div>
<div style="left:1702px;top:553px;width:46px;height:20px;background:#d6d6d6;border-bottom:1px solid #b0b0b0"></div>
<div style="left:1706px;top:555px;width:14px;height:16px;border:1px solid #b0b0b0;border-right-color:#f4f4f4;border-bottom-color:#f4f4f4;background:#dadada"></div>
<div style="left:1722px;top:555px;width:14px;height:16px;border:1px solid #b0b0b0;border-right-color:#f4f4f4;border-bottom-color:#f4f4f4;background:#dadada"></div>
<svg style="left:1707px;top:559px" width="12" height="8" viewBox="0 0 15 10"><path d="M1 5.500c3-5 10-5 13 0c-3 4.500-10 4.500-13 0z" fill="#fff" stroke="#111" stroke-width="1.200"/><circle cx="7.500" cy="5.300" r="2.800" fill="#111"/><circle cx="6.600" cy="4.400" r="0.900" fill="#fff"/><path d="M1 4c3-4.500 10-4.500 13 0" stroke="#111" stroke-width="1.600" fill="none"/></svg>
<div style="left:1739px;top:554px;width:4px;height:18px;background:#0f8a45"></div>
<div style="left:1747px;top:553px;width:1px;height:20px;background:#222"></div>
<div style="left:1748px;top:553px;width:150px;height:20px;background:#fff"></div>
<div style="left:1763px;top:572px;width:135px;height:1px;background:#999"></div>
<svg style="left:1780px;top:555px" width="16" height="16" viewBox="0 0 16 16"><rect x="0.500" y="0.500" width="15" height="15" fill="#fff" stroke="#000"/></svg>
<span class="t" style="left:1800px;top:556px;">Hintergrund</span>
<svg style="left:1873px;top:558px" width="11" height="11" viewBox="0 0 11 11"><circle cx="5.500" cy="5.500" r="4.300" fill="#f8f8f8" stroke="#333" stroke-width="1"/></svg>
<div style="left:1702px;top:573px;width:46px;height:20px;background:#d6d6d6;border-bottom:1px solid #b0b0b0"></div>
<div style="left:1706px;top:575px;width:14px;height:16px;border:1px solid #b0b0b0;border-right-color:#f4f4f4;border-bottom-color:#f4f4f4;background:#dadada"></div>
<div style="left:1722px;top:575px;width:14px;height:16px;border:1px solid #b0b0b0;border-right-color:#f4f4f4;border-bottom-color:#f4f4f4;background:#dadada"></div>
<svg style="left:1707px;top:579px" width="12" height="8" viewBox="0 0 15 10"><path d="M1 5.500c3-5 10-5 13 0c-3 4.500-10 4.500-13 0z" fill="#fff" stroke="#111" stroke-width="1.200"/><circle cx="7.500" cy="5.300" r="2.800" fill="#111"/><circle cx="6.600" cy="4.400" r="0.900" fill="#fff"/><path d="M1 4c3-4.500 10-4.500 13 0" stroke="#111" stroke-width="1.600" fill="none"/></svg>
<svg style="left:1724px;top:577px" width="11" height="13" viewBox="0 0 12 14"><path d="M3 6v-2.500a3 3 0 0 1 6 0v2.500" fill="none" stroke="#222" stroke-width="1.600"/><rect x="1.500" y="5.500" width="9" height="7" fill="#666" stroke="#111"/><path d="M3 8h6M3 10h6" stroke="#999" stroke-width="0.700"/></svg>
<div style="left:1739px;top:574px;width:4px;height:18px;background:#0f8a45"></div>
<div style="left:1747px;top:573px;width:1px;height:20px;background:#222"></div>
<div style="left:1748px;top:573px;width:150px;height:20px;background:#fff"></div>
<div style="left:1763px;top:592px;width:135px;height:1px;background:#999"></div>
<svg style="left:1780px;top:575px" width="16" height="16" viewBox="0 0 16 16"><rect x="0.500" y="0.500" width="15" height="15" fill="#e2622a" stroke="#000"/></svg>
<span class="t" style="left:1800px;top:576px;">&lt;Pfad&gt;</span>
<svg style="left:1873px;top:578px" width="11" height="11" viewBox="0 0 11 11"><circle cx="5.500" cy="5.500" r="4.300" fill="#f8f8f8" stroke="#333" stroke-width="1"/></svg>
<div style="left:1702px;top:593px;width:46px;height:20px;background:#d6d6d6;border-bottom:1px solid #b0b0b0"></div>
<div style="left:1706px;top:595px;width:14px;height:16px;border:1px solid #b0b0b0;border-right-color:#f4f4f4;border-bottom-color:#f4f4f4;background:#dadada"></div>
<div style="left:1722px;top:595px;width:14px;height:16px;border:1px solid #b0b0b0;border-right-color:#f4f4f4;border-bottom-color:#f4f4f4;background:#dadada"></div>
<svg style="left:1724px;top:597px" width="11" height="13" viewBox="0 0 12 14"><path d="M3 6v-2.500a3 3 0 0 1 6 0v2.500" fill="none" stroke="#222" stroke-width="1.600"/><rect x="1.500" y="5.500" width="9" height="7" fill="#666" stroke="#111"/><path d="M3 8h6M3 10h6" stroke="#999" stroke-width="0.700"/></svg>
<div style="left:1739px;top:594px;width:4px;height:18px;background:#ff5a10"></div>
<div style="left:1747px;top:593px;width:1px;height:20px;background:#222"></div>
<div style="left:1748px;top:593px;width:150px;height:20px;background:#d6d6d6;border-bottom:1px solid #aaa"></div>
<svg style="left:1753px;top:598px" width="8" height="11" viewBox="0 0 8 11"><path d="M0.500 0.500v9l6-4.500z" fill="#f0f0f8" stroke="#5a6a9a"/></svg>
<svg style="left:1765px;top:595px" width="16" height="16" viewBox="0 0 16 16"><rect x="0.500" y="0.500" width="15" height="15" fill="#fff" stroke="#000"/><path d="M1 12h14" stroke="#e9a080" stroke-width="1"/><rect x="7" y="5" width="1.500" height="1.500" fill="#bbb"/><rect x="7" y="9" width="1.500" height="1.500" fill="#bbb"/></svg>
<span class="t" style="left:1785px;top:596px;">Vorlage Vorderseite</span>
<svg style="left:1873px;top:598px" width="11" height="11" viewBox="0 0 11 11"><circle cx="5.500" cy="5.500" r="4.300" fill="#f8f8f8" stroke="#333" stroke-width="1"/></svg>
<div style="left:1702px;top:613px;width:46px;height:20px;background:#d6d6d6;border-bottom:1px solid #b0b0b0"></div>
<div style="left:1706px;top:615px;width:14px;height:16px;border:1px solid #b0b0b0;border-right-color:#f4f4f4;border-bottom-color:#f4f4f4;background:#dadada"></div>
<div style="left:1722px;top:615px;width:14px;height:16px;border:1px solid #b0b0b0;border-right-color:#f4f4f4;border-bottom-color:#f4f4f4;background:#dadada"></div>
<svg style="left:1707px;top:619px" width="12" height="8" viewBox="0 0 15 10"><path d="M1 5.500c3-5 10-5 13 0c-3 4.500-10 4.500-13 0z" fill="#fff" stroke="#111" stroke-width="1.200"/><circle cx="7.500" cy="5.300" r="2.800" fill="#111"/><circle cx="6.600" cy="4.400" r="0.900" fill="#fff"/><path d="M1 4c3-4.500 10-4.500 13 0" stroke="#111" stroke-width="1.600" fill="none"/></svg>
<svg style="left:1724px;top:617px" width="11" height="13" viewBox="0 0 12 14"><path d="M3 6v-2.500a3 3 0 0 1 6 0v2.500" fill="none" stroke="#222" stroke-width="1.600"/><rect x="1.500" y="5.500" width="9" height="7" fill="#666" stroke="#111"/><path d="M3 8h6M3 10h6" stroke="#999" stroke-width="0.700"/></svg>
<div style="left:1739px;top:614px;width:4px;height:18px;background:#ff5a10"></div>
<div style="left:1747px;top:613px;width:1px;height:20px;background:#222"></div>
<div style="left:1748px;top:613px;width:150px;height:20px;background:#d6d6d6;border-bottom:1px solid #aaa"></div>
<svg style="left:1753px;top:618px" width="8" height="11" viewBox="0 0 8 11"><path d="M0.500 0.500v9l6-4.500z" fill="#f0f0f8" stroke="#5a6a9a"/></svg>
<svg style="left:1765px;top:615px" width="16" height="16" viewBox="0 0 16 16"><rect x="0.500" y="0.500" width="15" height="15" fill="#fff" stroke="#000"/><path d="M1 12h14" stroke="#e9a080" stroke-width="1"/><rect x="7" y="5" width="1.500" height="1.500" fill="#bbb"/><rect x="7" y="9" width="1.500" height="1.500" fill="#bbb"/></svg>
<span class="t" style="left:1785px;top:616px;">Vorlage Rückseite</span>
<svg style="left:1873px;top:618px" width="11" height="11" viewBox="0 0 11 11"><circle cx="5.500" cy="5.500" r="4.300" fill="#f8f8f8" stroke="#333" stroke-width="1"/></svg>
<div style="left:1702px;top:633px;width:196px;height:1px;background:#222"></div>
<div style="left:1898px;top:452px;width:15px;height:306px;background:#e6e6e6"></div>
<svg style="left:1901px;top:460px" width="9" height="5" viewBox="0 0 9 5" ><path d="M0 4.500h8l-4-4.500z" fill="#777"/></svg>
<svg style="left:1901px;top:748px" width="9" height="5" viewBox="0 0 9 5" ><path d="M0 0h8l-4 4.500z" fill="#777"/></svg>
<div style="left:1702px;top:757px;width:196px;height:1px;background:#222"></div>
<span class="t" style="left:1712px;top:760px;">3 Ebenen</span>
<svg style="left:1782px;top:759px" width="14" height="14" viewBox="0 0 14 14" ><rect x="1" y="1" width="7" height="7" fill="none" stroke="#999" stroke-dasharray="1 1"/><circle cx="8" cy="8" r="4.500" fill="#e8e8e8" stroke="#666"/><path d="M8 8v-4.500a4.500 4.500 0 0 0-4.500 4.500z" fill="#444"/></svg>
<svg style="left:1811px;top:761px" width="16" height="11" viewBox="0 0 16 11" ><path d="M1 3h4M3.500 1l2 2-2 2" stroke="#777" fill="none"/><rect x="7.500" y="1.500" width="7" height="8" fill="#f4f4f4" stroke="#999"/><path d="M9 10h6v-7" stroke="#333" fill="none"/></svg>
<svg style="left:1846px;top:761px" width="12" height="11" viewBox="0 0 12 11" ><rect x="0.500" y="0.500" width="9" height="9" fill="#f4f4f4" stroke="#888"/><path d="M3 9.500h7v-7" stroke="#111" stroke-width="1.400" fill="none"/><rect x="3" y="4" width="4" height="4" fill="#555"/></svg>
<svg style="left:1877px;top:760px" width="11" height="13" viewBox="0 0 11 13" ><path d="M1.500 3.500h8l-1 8.500h-6z" fill="#e8e8e8" stroke="#333"/><path d="M0.500 3h10" stroke="#333" stroke-width="1.300"/><path d="M3.500 1.500h4" stroke="#333" stroke-width="1.300"/><path d="M4 5v5.500M5.500 5v5.500M7 5v5.500" stroke="#555" stroke-width="0.800"/></svg>
<div style="left:1701px;top:775px;width:214px;height:3px;background:#3a3a3a"></div>
<div style="left:1701px;top:778px;width:214px;height:17px;background:linear-gradient(#9c9c9c,#8a8a8a);border-bottom:1px solid #6a6a6a"></div>
<div style="left:1701px;top:778px;width:55px;height:17px;background:linear-gradient(#a6a6a6,#949494);border-right:1px solid #747474;border-bottom:1px solid #6a6a6a;border-left:1px solid #b4b4b4"></div>
<span class="b" style="left:1708px;top:780px;color:#2e2e2e">Aussehen</span>
<div style="left:1756px;top:778px;width:45px;height:17px;background:linear-gradient(#a6a6a6,#949494);border-right:1px solid #747474;border-bottom:1px solid #6a6a6a;border-left:1px solid #b4b4b4"></div>
<span class="b" style="left:1763px;top:780px;color:#2e2e2e">Verlauf</span>
<div style="left:1801px;top:778px;width:75px;height:18px;background:linear-gradient(#e6e6e6,#d6d6d6);border-right:1px solid #7a7a7a"></div>
<svg style="left:1806px;top:782px" width="6" height="9" viewBox="0 0 6 9"><path d="M0.500 3.500l2.500-3 2.500 3zM0.500 5.500l2.500 3 2.500-3z" fill="#222"/></svg>
<span class="b" style="left:1814px;top:780px;color:#222">Transparenz</span>
<svg style="left:1897px;top:782px" width="15" height="9" viewBox="0 0 15 9"><path d="M0 2h4l-2 3z" fill="#333"/><path d="M6 1.500h8M6 4.500h8M6 7.500h8" stroke="#444" stroke-width="1.200"/></svg>
<div style="left:1701px;top:796px;width:214px;height:98px;background:#d6d6d6"></div>
<div style="left:1709px;top:801px;width:93px;height:17px;background:#fff;border:1px solid #e6e6e6"></div>
<div style="left:1710px;top:802px;width:74px;height:15px;border:1px solid #c8c8c8;background:#fff"></div>
<span class="t" style="left:1712px;top:803px;">Normal</span>
<svg style="left:1790px;top:808px" width="9" height="6" viewBox="0 0 9 6" ><path d="M0 0h8l-4 5z" fill="#000"/></svg>
<span class="t" style="left:1806px;top:803px;">Deckkr.:</span>
<div class="inp" style="left:1851px;top:800px;width:45px;height:19px;"></div>
<span class="t" style="left:1857px;top:803px;">100</span>
<div style="left:1881px;top:801px;width:14px;height:17px;background:linear-gradient(#f8f8f8,#e6e6e6)"></div>
<svg style="left:1886px;top:805px" width="6" height="10" viewBox="0 0 6 10" ><path d="M0.500 0v9l4.500-4.500z" fill="#222"/></svg>
<span class="t" style="left:1898px;top:803px;">%</span>
<div style="left:1705px;top:823px;width:203px;height:2px;background:#b0b0b0;border-bottom:1px solid #ececec"></div>
<div style="left:1708px;top:830px;width:119px;height:56px;border:1px solid #b0b0b0;border-right-color:#f0f0f0;border-bottom-color:#f0f0f0"></div>
<div style="left:1711px;top:833px;width:51px;height:50px;background:#fff;border:1px solid #000"></div>
<svg style="left:1711px;top:833px" width="51" height="50" viewBox="0 0 51 50" ><rect x="3" y="22" width="7" height="8" fill="#c6292f"/><path d="M4 26h5" stroke="#fff"/><rect x="23" y="15" width="8" height="8" fill="#c6292f"/><path d="M29 17v4h-4" stroke="#e8a0a0" stroke-width="0.800" fill="none"/><rect x="38" y="25" width="10" height="10" fill="#c6292f"/><path d="M43 28c-1-1.500-3.500-1-3.500 1c0 2 2 3.500 3.500 4.500c1.500-1 3.500-2.500 3.500-4.500c0-2-2.500-2.500-3.500-1z" fill="none" stroke="#f0c0c0" stroke-width="0.900"/></svg>
<div style="left:1833px;top:843px;width:13px;height:13px;background:#dedede;border:1px solid #b8b8b8;border-right-color:#f4f4f4;border-bottom-color:#f4f4f4"></div>
<span class="t" style="left:1848px;top:843px;color:#8c8c8c;">Maskieren</span>
<div style="left:1833px;top:860px;width:13px;height:13px;background:#dedede;border:1px solid #b8b8b8;border-right-color:#f4f4f4;border-bottom-color:#f4f4f4"></div>
<span class="t" style="left:1848px;top:860px;color:#8c8c8c;">Umkehren</span>
<div style="left:1701px;top:893px;width:214px;height:3px;background:#3a3a3a"></div>
<div style="left:1701px;top:896px;width:214px;height:16px;background:linear-gradient(#9c9c9c,#8a8a8a);border-bottom:1px solid #6a6a6a"></div>
<div style="left:1701px;top:896px;width:74px;height:17px;background:linear-gradient(#e6e6e6,#d6d6d6);border-right:1px solid #7a7a7a"></div>
<svg style="left:1706px;top:900px" width="6" height="9" viewBox="0 0 6 9"><path d="M0.500 3.500l2.500-3 2.500 3zM0.500 5.500l2.500 3 2.500-3z" fill="#222"/></svg>
<span class="b" style="left:1714px;top:898px;color:#222">Ausrichten</span>
<div style="left:1775px;top:896px;width:64px;height:16px;background:linear-gradient(#a6a6a6,#949494);border-right:1px solid #747474;border-bottom:1px solid #6a6a6a;border-left:1px solid #b4b4b4"></div>
<span class="b" style="left:1782px;top:898px;color:#2e2e2e">Pathfinder</span>
<svg style="left:1897px;top:900px" width="15" height="9" viewBox="0 0 15 9"><path d="M0 2h4l-2 3z" fill="#333"/><path d="M6 1.500h8M6 4.500h8M6 7.500h8" stroke="#444" stroke-width="1.200"/></svg>
<div style="left:1701px;top:913px;width:214px;height:122px;background:#d6d6d6"></div>
<span class="t" style="left:1706px;top:917px;">Objekte ausrichten:</span>
<svg style="left:1713px;top:932px;filter:drop-shadow(0 1px 0 rgba(255,255,255,.6))" width="18" height="15" viewBox="0 0 18 15" shape-rendering="crispEdges"><rect x="0" y="0" width="1" height="14" fill="#111"/><rect x="3" y="1" width="6" height="4" fill="url(#ag)"/><path d="M3.5 5V1.5H9" fill="none" stroke="#8c8c8c"/><path d="M3 5.5H9.5V1" fill="none" stroke="#1e1e1e"/><rect x="3" y="8" width="11" height="4" fill="url(#ag)"/><path d="M3.5 12V8.5H14" fill="none" stroke="#8c8c8c"/><path d="M3 12.5H14.5V8" fill="none" stroke="#1e1e1e"/></svg>
<svg style="left:1746px;top:932px;filter:drop-shadow(0 1px 0 rgba(255,255,255,.6))" width="18" height="15" viewBox="0 0 18 15" shape-rendering="crispEdges"><rect x="8" y="0" width="1" height="14" fill="#111"/><rect x="5" y="1" width="6" height="4" fill="url(#ag)"/><path d="M5.5 5V1.5H11" fill="none" stroke="#8c8c8c"/><path d="M5 5.5H11.5V1" fill="none" stroke="#1e1e1e"/><rect x="2" y="8" width="12" height="4" fill="url(#ag)"/><path d="M2.5 12V8.5H14" fill="none" stroke="#8c8c8c"/><path d="M2 12.5H14.5V8" fill="none" stroke="#1e1e1e"/></svg>
<svg style="left:1780px;top:932px;filter:drop-shadow(0 1px 0 rgba(255,255,255,.6))" width="18" height="15" viewBox="0 0 18 15" shape-rendering="crispEdges"><rect x="15" y="0" width="1" height="14" fill="#111"/><rect x="7" y="1" width="6" height="4" fill="url(#ag)"/><path d="M7.5 5V1.5H13" fill="none" stroke="#8c8c8c"/><path d="M7 5.5H13.5V1" fill="none" stroke="#1e1e1e"/><rect x="2" y="8" width="11" height="4" fill="url(#ag)"/><path d="M2.5 12V8.5H13" fill="none" stroke="#8c8c8c"/><path d="M2 12.5H13.5V8" fill="none" stroke="#1e1e1e"/></svg>
<svg style="left:1814px;top:932px;filter:drop-shadow(0 1px 0 rgba(255,255,255,.6))" width="18" height="15" viewBox="0 0 18 15" shape-rendering="crispEdges"><rect x="0" y="1" width="17" height="1" fill="#111"/><rect x="3" y="3" width="4" height="9" fill="url(#ah)"/><path d="M3.5 12V3.5H7" fill="none" stroke="#8c8c8c"/><path d="M3 12.5H7.5V3" fill="none" stroke="#1e1e1e"/><rect x="10" y="3" width="4" height="4" fill="url(#ah)"/><path d="M10.5 7V3.5H14" fill="none" stroke="#8c8c8c"/><path d="M10 7.5H14.5V3" fill="none" stroke="#1e1e1e"/></svg>
<svg style="left:1848px;top:932px;filter:drop-shadow(0 1px 0 rgba(255,255,255,.6))" width="18" height="15" viewBox="0 0 18 15" shape-rendering="crispEdges"><rect x="0" y="7" width="18" height="1" fill="#111"/><rect x="3" y="2" width="4" height="10" fill="url(#ah)"/><path d="M3.5 12V2.5H7" fill="none" stroke="#8c8c8c"/><path d="M3 12.5H7.5V2" fill="none" stroke="#1e1e1e"/><rect x="10" y="5" width="4" height="4" fill="url(#ah)"/><path d="M10.5 9V5.5H14" fill="none" stroke="#8c8c8c"/><path d="M10 9.5H14.5V5" fill="none" stroke="#1e1e1e"/></svg>
<svg style="left:1882px;top:932px;filter:drop-shadow(0 1px 0 rgba(255,255,255,.6))" width="18" height="15" viewBox="0 0 18 15" shape-rendering="crispEdges"><rect x="0" y="13" width="17" height="1" fill="#111"/><rect x="3" y="2" width="4" height="10" fill="url(#ah)"/><path d="M3.5 12V2.5H7" fill="none" stroke="#8c8c8c"/><path d="M3 12.5H7.5V2" fill="none" stroke="#1e1e1e"/><rect x="10" y="8" width="4" height="4" fill="url(#ah)"/><path d="M10.5 12V8.5H14" fill="none" stroke="#8c8c8c"/><path d="M10 12.5H14.5V8" fill="none" stroke="#1e1e1e"/></svg>
<div style="left:1706px;top:952px;width:204px;height:2px;background:#a8a8a8;border-bottom:1px solid #ececec"></div>
<span class="t" style="left:1706px;top:955px;">Objekte verteilen:</span>
<svg style="left:1712px;top:970px;filter:drop-shadow(0 1px 0 rgba(255,255,255,.6))" width="18" height="15" viewBox="0 0 18 15" shape-rendering="crispEdges"><rect x="0" y="1" width="17" height="1" fill="#111"/><rect x="0" y="8" width="17" height="1" fill="#111"/><rect x="6" y="2" width="6" height="3" fill="url(#ag)"/><path d="M6.5 5V2.5H12" fill="none" stroke="#8c8c8c"/><path d="M6 5.5H12.5V2" fill="none" stroke="#1e1e1e"/><rect x="3" y="9" width="12" height="3" fill="url(#ag)"/><path d="M3.5 12V9.5H15" fill="none" stroke="#8c8c8c"/><path d="M3 12.5H15.5V9" fill="none" stroke="#1e1e1e"/></svg>
<svg style="left:1746px;top:970px;filter:drop-shadow(0 1px 0 rgba(255,255,255,.6))" width="18" height="15" viewBox="0 0 18 15" shape-rendering="crispEdges"><rect x="0" y="3" width="17" height="1" fill="#111"/><rect x="0" y="10" width="17" height="1" fill="#111"/><rect x="6" y="1" width="6" height="4" fill="url(#ag)"/><path d="M6.5 5V1.5H12" fill="none" stroke="#8c8c8c"/><path d="M6 5.5H12.5V1" fill="none" stroke="#1e1e1e"/><rect x="3" y="8" width="12" height="4" fill="url(#ag)"/><path d="M3.5 12V8.5H15" fill="none" stroke="#8c8c8c"/><path d="M3 12.5H15.5V8" fill="none" stroke="#1e1e1e"/></svg>
<svg style="left:1780px;top:970px;filter:drop-shadow(0 1px 0 rgba(255,255,255,.6))" width="18" height="15" viewBox="0 0 18 15" shape-rendering="crispEdges"><rect x="0" y="6" width="17" height="1" fill="#111"/><rect x="0" y="13" width="17" height="1" fill="#111"/><rect x="6" y="2" width="6" height="3" fill="url(#ag)"/><path d="M6.5 5V2.5H12" fill="none" stroke="#8c8c8c"/><path d="M6 5.5H12.5V2" fill="none" stroke="#1e1e1e"/><rect x="3" y="9" width="12" height="3" fill="url(#ag)"/><path d="M3.5 12V9.5H15" fill="none" stroke="#8c8c8c"/><path d="M3 12.5H15.5V9" fill="none" stroke="#1e1e1e"/></svg>
<svg style="left:1815px;top:970px;filter:drop-shadow(0 1px 0 rgba(255,255,255,.6))" width="18" height="15" viewBox="0 0 18 15" shape-rendering="crispEdges"><rect x="1" y="0" width="1" height="14" fill="#111"/><rect x="8" y="0" width="1" height="14" fill="#111"/><rect x="2" y="2" width="4" height="9" fill="url(#ah)"/><path d="M2.5 11V2.5H6" fill="none" stroke="#8c8c8c"/><path d="M2 11.5H6.5V2" fill="none" stroke="#1e1e1e"/><rect x="9" y="5" width="3" height="4" fill="url(#ah)"/><path d="M9.5 9V5.5H12" fill="none" stroke="#8c8c8c"/><path d="M9 9.5H12.5V5" fill="none" stroke="#1e1e1e"/></svg>
<svg style="left:1849px;top:970px;filter:drop-shadow(0 1px 0 rgba(255,255,255,.6))" width="18" height="15" viewBox="0 0 18 15" shape-rendering="crispEdges"><rect x="4" y="0" width="1" height="14" fill="#111"/><rect x="11" y="0" width="1" height="14" fill="#111"/><rect x="2" y="2" width="4" height="9" fill="url(#ah)"/><path d="M2.5 11V2.5H6" fill="none" stroke="#8c8c8c"/><path d="M2 11.5H6.5V2" fill="none" stroke="#1e1e1e"/><rect x="10" y="5" width="3" height="4" fill="url(#ah)"/><path d="M10.5 9V5.5H13" fill="none" stroke="#8c8c8c"/><path d="M10 9.5H13.5V5" fill="none" stroke="#1e1e1e"/></svg>
<svg style="left:1882px;top:970px;filter:drop-shadow(0 1px 0 rgba(255,255,255,.6))" width="18" height="15" viewBox="0 0 18 15" shape-rendering="crispEdges"><rect x="6" y="0" width="1" height="14" fill="#111"/><rect x="13" y="0" width="1" height="14" fill="#111"/><rect x="1" y="2" width="4" height="9" fill="url(#ah)"/><path d="M1.5 11V2.5H5" fill="none" stroke="#8c8c8c"/><path d="M1 11.5H5.5V2" fill="none" stroke="#1e1e1e"/><rect x="9" y="5" width="3" height="4" fill="url(#ah)"/><path d="M9.5 9V5.5H12" fill="none" stroke="#8c8c8c"/><path d="M9 9.5H12.5V5" fill="none" stroke="#1e1e1e"/></svg>
<div style="left:1706px;top:990px;width:204px;height:2px;background:#a8a8a8;border-bottom:1px solid #ececec"></div>
<span class="t" style="left:1706px;top:993px;">Abstand verteilen:</span>
<span class="t" style="left:1840px;top:995px;">Ausrichten an:</span>
<div style="left:1835px;top:997px;width:2px;height:28px;background:#a8a8a8;border-right:1px solid #ececec"></div>
<svg style="left:1711px;top:1009px" width="20" height="16" viewBox="0 0 20 16" shape-rendering="crispEdges"><rect x="0" y="7" width="19" height="1" fill="#111"/><rect x="0" y="9" width="19" height="1" fill="#111"/><rect x="6" y="1" width="7" height="3" fill="url(#ag)"/><path d="M6.5 4V1.5H13" fill="none" stroke="#8c8c8c"/><path d="M6 4.5H13.5V1" fill="none" stroke="#1e1e1e"/><rect x="8" y="12" width="3" height="2" fill="url(#ag)"/><path d="M8.5 14V12.5H11" fill="none" stroke="#8c8c8c"/><path d="M8 14.5H11.5V12" fill="none" stroke="#1e1e1e"/></svg>
<svg style="left:1745px;top:1010px" width="18" height="15" viewBox="0 0 18 15" shape-rendering="crispEdges"><rect x="1" y="1" width="2" height="4" fill="url(#ah)"/><path d="M1.5 5V1.5H3" fill="none" stroke="#8c8c8c"/><path d="M1 5.5H3.5V1" fill="none" stroke="#1e1e1e"/><rect x="7" y="0" width="1" height="13" fill="#111"/><rect x="9" y="0" width="1" height="13" fill="#111"/><rect x="11" y="3" width="4" height="9" fill="url(#ah)"/><path d="M11.5 12V3.5H15" fill="none" stroke="#8c8c8c"/><path d="M11 12.5H15.5V3" fill="none" stroke="#1e1e1e"/></svg>
<div style="left:1776px;top:1008px;width:54px;height:19px;background:#e2e2e2;border:1px solid #f4f4f4;box-shadow:0 0 0 1px #bdbdbd inset"></div>
<div style="left:1777px;top:1009px;width:13px;height:17px;background:linear-gradient(#f6f6f6,#e0e0e0);border:1px solid #b4b4bc"></div>
<svg style="left:1780px;top:1012px" width="8" height="11" viewBox="0 0 8 11"><path d="M0 4.500h7l-3.500-4z M0 6.5h7l-3.500 4z" fill="#b8b8b8"/></svg>
<span class="t" style="left:1795px;top:1011px;color:#9a9a9a">0 mm</span>
<svg style="left:1861px;top:1009px" width="24" height="18" viewBox="0 0 24 18" ><rect x="1" y="1" width="12" height="15" fill="#e4e4e4" stroke="#000" stroke-width="1.300" stroke-dasharray="2.500 1.500"/><path d="M7 3.500l-1.800 2.500h3.600zM7 13.500l-1.800-2.500h3.600zM2.500 8.500l2.500-1.800v3.600zM11.500 8.500l-2.500-1.800v3.600z" fill="#000"/><path d="M17.500 7h5l-2.500 4.500z" fill="#222"/></svg>
<div style="left:112px;top:36px;width:82px;height:32px;border:5px solid #fe0000;border-radius:2px"></div>
<div style="left:5px;top:93px;width:33px;height:31px;border:5px solid #fe0000;border-radius:3px"></div>
<div style="left:1777px;top:491px;width:123px;height:65px;border:5px solid #fe0000;border-radius:3px"></div>
</body></html>
